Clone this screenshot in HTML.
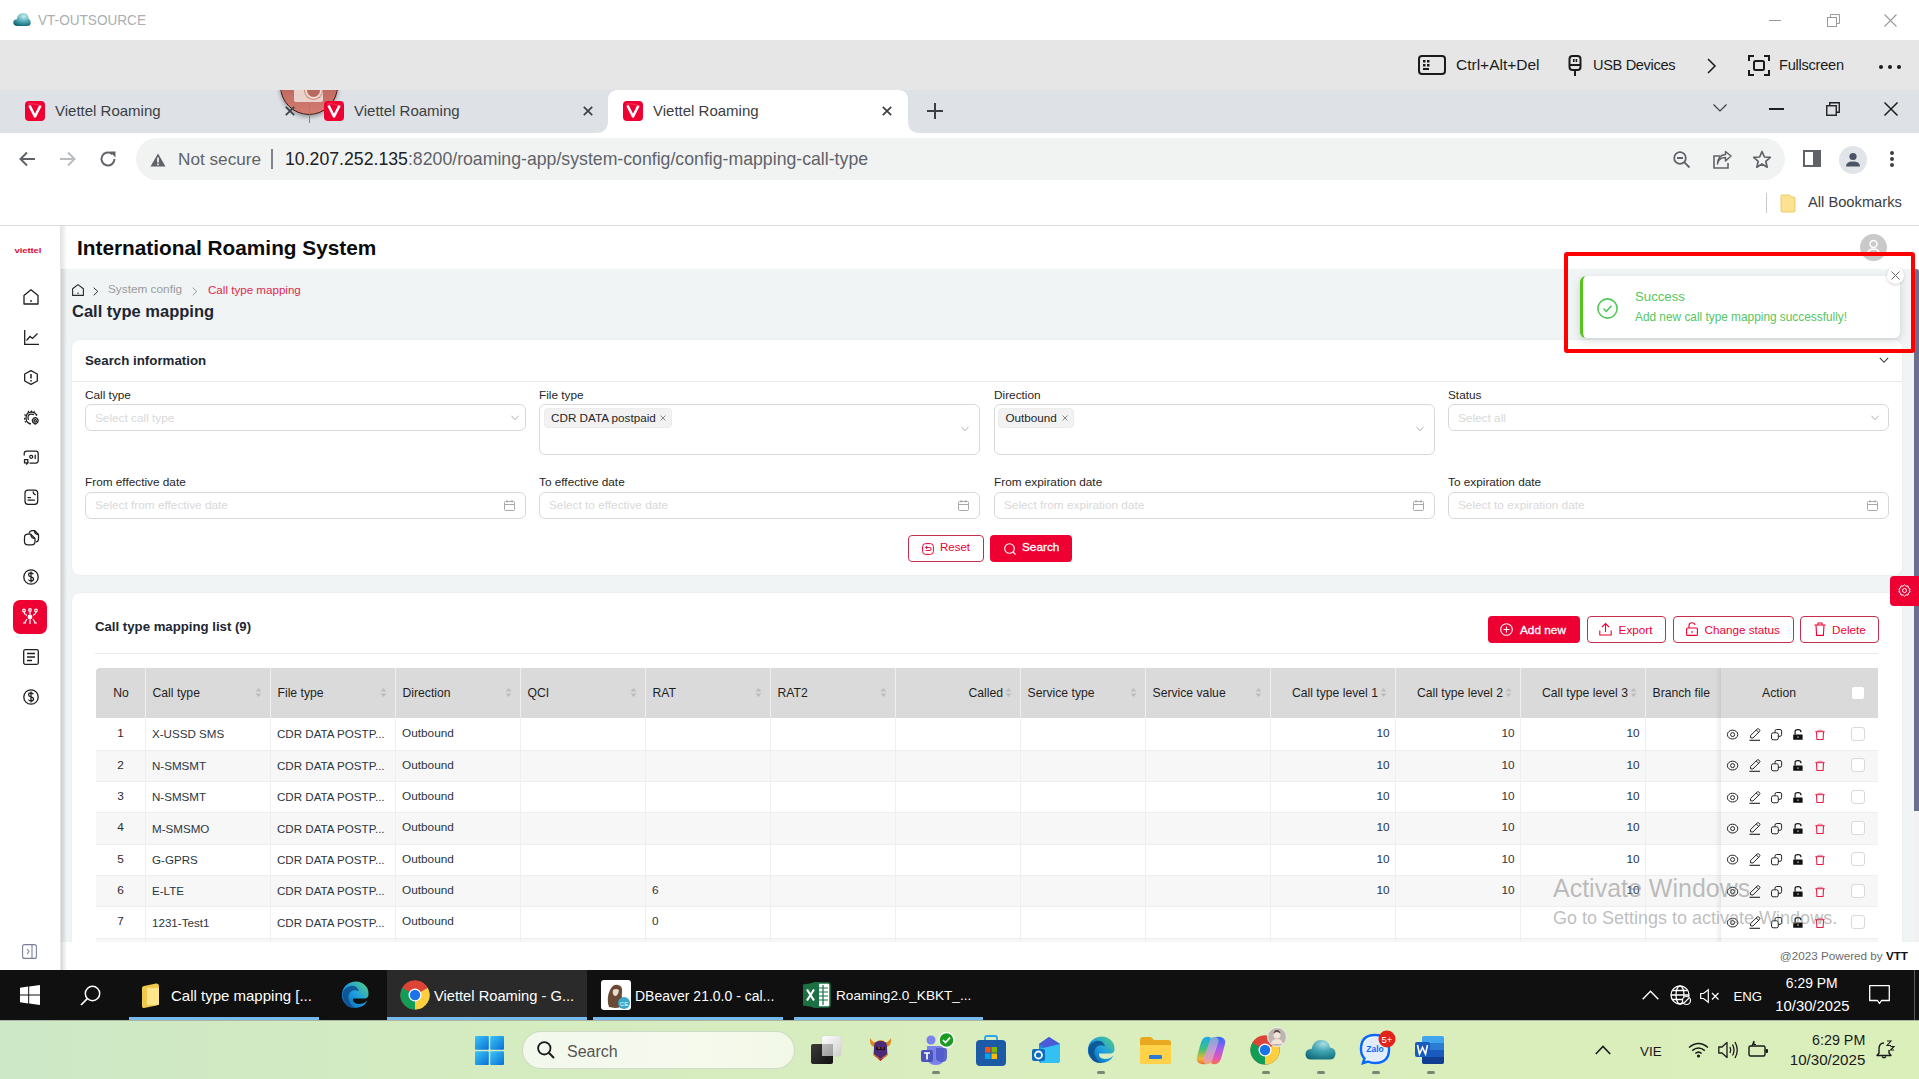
<!DOCTYPE html>
<html><head><meta charset="utf-8">
<style>
*{box-sizing:border-box;margin:0;padding:0}
html,body{width:1919px;height:1079px;overflow:hidden;background:#fff;font-family:"Liberation Sans",sans-serif;color:#222}
.a{position:absolute}
.t{position:absolute;white-space:nowrap;line-height:1}
svg{position:absolute;overflow:visible}
</style></head><body>
<!-- ===== Title bar ===== -->
<div class="a" style="left:0;top:0;width:1919px;height:40px;background:#fff"></div>
<svg style="left:13px;top:12px" width="18" height="15" viewBox="0 0 18 15"><defs><radialGradient id="cl" cx="0.6" cy="0.25" r="0.8"><stop offset="0" stop-color="#c9eef2"/><stop offset="0.45" stop-color="#5fb3bf"/><stop offset="1" stop-color="#0e6673"/></radialGradient></defs><path d="M4.5 14 Q0.3 14 0.3 10.6 Q0.3 7.4 3.8 7.2 Q4.6 1.2 10 1.2 Q15.6 1.2 15.8 7 Q17.7 7.8 17.7 10.5 Q17.7 14 14 14 Z" fill="url(#cl)"/></svg>
<div class="t" style="left:38px;top:12.3px;font-size:15px;color:#a9afb4;transform:scaleX(0.906);transform-origin:0 0">VT-OUTSOURCE</div>
<!-- window controls -->
<div class="a" style="left:1769px;top:20px;width:12px;height:1px;background:#9a9a9a"></div>
<svg style="left:1827px;top:14px" width="13" height="13" viewBox="0 0 13 13"><rect x="0.5" y="3.5" width="9" height="9" fill="none" stroke="#9a9a9a"/><path d="M3.5 3.5 V0.5 H12.5 V9.5 H9.5" fill="none" stroke="#9a9a9a"/></svg>
<svg style="left:1884px;top:14px" width="13" height="13" viewBox="0 0 13 13"><path d="M0.5 0.5 L12.5 12.5 M12.5 0.5 L0.5 12.5" stroke="#9a9a9a" stroke-width="1.1"/></svg>

<!-- ===== Remote toolbar ===== -->
<div class="a" style="left:0;top:40px;width:1919px;height:50px;background:#e6e6e6"></div>
<svg style="left:1418px;top:55px" width="28" height="20" viewBox="0 0 28 20"><rect x="1" y="1" width="26" height="18" rx="3" fill="none" stroke="#1b1b1b" stroke-width="2"/><rect x="5" y="5" width="2.5" height="2.5" fill="#1b1b1b"/><rect x="9" y="5" width="2.5" height="2.5" fill="#1b1b1b"/><rect x="5" y="9" width="2.5" height="2.5" fill="#1b1b1b"/><rect x="9" y="9" width="2.5" height="2.5" fill="#1b1b1b"/><rect x="5" y="13" width="6" height="2" fill="#1b1b1b"/></svg>
<div class="t" style="left:1456px;top:57px;font-size:15.5px;color:#1b1b1b">Ctrl+Alt+Del</div>
<svg style="left:1568px;top:55px" width="14" height="21" viewBox="0 0 14 21"><rect x="1.5" y="1" width="11" height="14" rx="3" fill="none" stroke="#1b1b1b" stroke-width="2"/><rect x="5" y="4" width="1.6" height="3" fill="#1b1b1b"/><rect x="7.6" y="4" width="1.6" height="3" fill="#1b1b1b"/><rect x="6" y="15" width="2" height="6" fill="#1b1b1b"/><rect x="1.5" y="9" width="11" height="2" fill="#1b1b1b"/></svg>
<div class="t" style="left:1593px;top:57.5px;font-size:14.6px;color:#1b1b1b;letter-spacing:-0.35px">USB Devices</div>
<svg style="left:1707px;top:58px" width="10" height="16" viewBox="0 0 10 16"><path d="M1 1 L8 8 L1 15" fill="none" stroke="#1b1b1b" stroke-width="1.5"/></svg>
<svg style="left:1748px;top:55px" width="22" height="21" viewBox="0 0 22 21"><path d="M1 6 V1 H6 M16 1 H21 V6 M21 15 V20 H16 M6 20 H1 V15" fill="none" stroke="#1b1b1b" stroke-width="2"/><rect x="6" y="6" width="10" height="9" rx="1.5" fill="none" stroke="#1b1b1b" stroke-width="2"/></svg>
<div class="t" style="left:1779px;top:57.5px;font-size:14.6px;color:#1b1b1b;letter-spacing:-0.25px">Fullscreen</div>
<div class="a" style="left:1879px;top:65px;width:4px;height:4px;border-radius:2px;background:#1b1b1b"></div>
<div class="a" style="left:1888px;top:65px;width:4px;height:4px;border-radius:2px;background:#1b1b1b"></div>
<div class="a" style="left:1897px;top:65px;width:4px;height:4px;border-radius:2px;background:#1b1b1b"></div>

<!-- ===== Tab strip ===== -->
<div class="a" style="left:0;top:90px;width:1919px;height:43px;background:#dee1e6"></div>

<!-- tab1 -->
<svg style="left:25px;top:101px" width="20" height="20" viewBox="0 0 20 20"><rect x="0" y="0" width="20" height="20" rx="4" fill="#ee0033"/><path d="M4.5 4.5 L10 15.5 L15.5 4.5" fill="none" stroke="#fff" stroke-width="2.6" stroke-linejoin="round"/><path d="M3 3 Q12 2 17 6" fill="none" stroke="#ff6f8a" stroke-width="0.5"/></svg>
<div class="t" style="left:55px;top:103px;font-size:15px;color:#3c4043">Viettel Roaming</div>

<div class="a" style="left:309px;top:100px;width:1px;height:23px;background:#80868b"></div>
<!-- camera circle -->
<div class="a" style="left:0;top:90px;width:400px;height:43px;overflow:hidden">
 <div class="a" style="left:280px;top:-33px;width:58px;height:58px;border-radius:50%;background:linear-gradient(180deg,#ad5e55 0%,#bf6a60 55%,#d47c72 100%);border:1.2px solid #3a1512;box-shadow:0 2px 4px rgba(0,0,0,.35)"></div>
 <div class="a" style="left:294px;top:-4px;width:29px;height:16px;background:#ebd3cd;border-radius:0 0 2px 2px"></div>
 <div class="a" style="left:305px;top:-8px;width:17px;height:17px;border-radius:50%;border:2px solid #f5d6d0;background:#b86a60;box-shadow:0 0 0 1px #c9857c"></div>
</div>
<div class="a" style="left:309px;top:105px;width:1px;height:18px;background:#80868b;opacity:.8"></div>
<svg style="left:285px;top:106px" width="10" height="10" viewBox="0 0 10 10"><path d="M0.8 0.8 L9.2 9.2 M9.2 0.8 L0.8 9.2" stroke="#3c4043" stroke-width="1.7"/></svg>
<!-- tab2 -->
<svg style="left:324px;top:101px" width="20" height="20" viewBox="0 0 20 20"><rect x="0" y="0" width="20" height="20" rx="4" fill="#ee0033"/><path d="M4.5 4.5 L10 15.5 L15.5 4.5" fill="none" stroke="#fff" stroke-width="2.6" stroke-linejoin="round"/><path d="M3 3 Q12 2 17 6" fill="none" stroke="#ff6f8a" stroke-width="0.5"/></svg>
<div class="t" style="left:354px;top:103px;font-size:15px;color:#3c4043">Viettel Roaming</div>
<svg style="left:583px;top:106px" width="10" height="10" viewBox="0 0 10 10"><path d="M0.8 0.8 L9.2 9.2 M9.2 0.8 L0.8 9.2" stroke="#3c4043" stroke-width="1.7"/></svg>
<!-- active tab -->
<svg style="left:596px;top:90px" width="324" height="43" viewBox="0 0 324 43"><path d="M0 43 Q12 43 12 31 V10 Q12 0 22 0 H302 Q312 0 312 10 V31 Q312 43 324 43 Z" fill="#fff"/></svg>
<svg style="left:623px;top:101px" width="20" height="20" viewBox="0 0 20 20"><rect x="0" y="0" width="20" height="20" rx="4" fill="#ee0033"/><path d="M4.5 4.5 L10 15.5 L15.5 4.5" fill="none" stroke="#fff" stroke-width="2.6" stroke-linejoin="round"/><path d="M3 3 Q12 2 17 6" fill="none" stroke="#ff6f8a" stroke-width="0.5"/></svg>
<div class="t" style="left:653px;top:103px;font-size:15px;color:#3c4043">Viettel Roaming</div>
<svg style="left:882px;top:106px" width="10" height="10" viewBox="0 0 10 10"><path d="M0.8 0.8 L9.2 9.2 M9.2 0.8 L0.8 9.2" stroke="#3c4043" stroke-width="1.7"/></svg>
<svg style="left:927px;top:103px" width="16" height="16" viewBox="0 0 16 16"><path d="M8 0 V16 M0 8 H16" stroke="#3c4043" stroke-width="2"/></svg>
<!-- right controls -->
<svg style="left:1713px;top:104px" width="14" height="8" viewBox="0 0 14 8"><path d="M0.5 0.5 L7 7 L13.5 0.5" fill="none" stroke="#3c4043" stroke-width="1.2"/></svg>
<div class="a" style="left:1769px;top:108px;width:15px;height:1.5px;background:#1f1f1f"></div>
<svg style="left:1826px;top:102px" width="14" height="14" viewBox="0 0 14 14"><rect x="0.75" y="3.75" width="9.5" height="9.5" fill="none" stroke="#1f1f1f" stroke-width="1.4"/><path d="M3.75 3.5 V0.75 H13.25 V10.25 H10.5" fill="none" stroke="#1f1f1f" stroke-width="1.4"/></svg>
<svg style="left:1884px;top:102px" width="14" height="14" viewBox="0 0 14 14"><path d="M0.5 0.5 L13.5 13.5 M13.5 0.5 L0.5 13.5" stroke="#1f1f1f" stroke-width="1.5"/></svg>


<!-- ===== Address bar ===== -->
<div class="a" style="left:0;top:133px;width:1919px;height:52px;background:#fff"></div>

<svg style="left:19px;top:151px" width="17" height="16" viewBox="0 0 17 16"><path d="M16 8 H2 M8 1.5 L1.5 8 L8 14.5" fill="none" stroke="#5f6368" stroke-width="2"/></svg>
<svg style="left:59px;top:151px" width="17" height="16" viewBox="0 0 17 16"><path d="M1 8 H15 M9 1.5 L15.5 8 L9 14.5" fill="none" stroke="#b9bcbf" stroke-width="2"/></svg>
<svg style="left:99px;top:150px" width="18" height="18" viewBox="0 0 18 18"><path d="M15.5 9 A6.5 6.5 0 1 1 13.4 4.2" fill="none" stroke="#5f6368" stroke-width="2"/><path d="M10.5 1.5 H16.5 V7.5 Z" fill="#5f6368"/></svg>
<div class="a" style="left:136px;top:138px;width:1649px;height:42px;border-radius:21px;background:#f1f3f3"></div>
<svg style="left:150px;top:153px" width="16" height="14" viewBox="0 0 16 14"><path d="M8 0.5 L15.5 13.5 H0.5 Z" fill="#5f6368"/><rect x="7.2" y="4.5" width="1.6" height="5" fill="#fff"/><rect x="7.2" y="10.6" width="1.6" height="1.6" fill="#fff"/></svg>
<div class="t" style="left:178px;top:151px;font-size:17.2px;color:#5f6368">Not secure</div>
<div class="a" style="left:271px;top:149px;width:2px;height:20px;background:#80868b"></div>
<div class="t" style="left:285px;top:151px;font-size:17.7px;color:#202124">10.207.252.135<span style="color:#5f6368">:8200/roaming-app/system-config/config-mapping-call-type</span></div>
<!-- zoom -->
<svg style="left:1673px;top:151px" width="18" height="18" viewBox="0 0 18 18"><circle cx="7" cy="7" r="5.8" fill="none" stroke="#5f6368" stroke-width="1.8"/><path d="M4 7 H10 M11.2 11.2 L16.5 16.5" stroke="#5f6368" stroke-width="1.8"/></svg>
<!-- share -->
<svg style="left:1713px;top:151px" width="19" height="18" viewBox="0 0 19 18"><path d="M7 5 H1 V17 H15 V12" fill="none" stroke="#5f6368" stroke-width="1.6"/><path d="M4.5 13 Q5.5 6.5 12.5 6.5 V10 L18 5 L12.5 0.5 V3.5 Q5 4 4.5 13 Z" fill="none" stroke="#5f6368" stroke-width="1.5" stroke-linejoin="round"/></svg>
<!-- star -->
<svg style="left:1752px;top:150px" width="20" height="19" viewBox="0 0 20 19"><path d="M10 1.5 L12.4 7 L18.3 7.4 L13.8 11.3 L15.2 17.2 L10 14 L4.8 17.2 L6.2 11.3 L1.7 7.4 L7.6 7 Z" fill="none" stroke="#5f6368" stroke-width="1.7" stroke-linejoin="round"/></svg>
<!-- side panel -->
<svg style="left:1803px;top:150px" width="18" height="17" viewBox="0 0 18 17"><rect x="1" y="1" width="16" height="15" fill="none" stroke="#5f6368" stroke-width="2"/><rect x="10" y="1" width="7" height="15" fill="#5f6368"/></svg>
<!-- profile -->
<div class="a" style="left:1839px;top:146px;width:28px;height:28px;border-radius:50%;background:#e1e4e8"></div>
<svg style="left:1843px;top:150px" width="20" height="20" viewBox="0 0 20 20"><circle cx="10" cy="6.5" r="3.6" fill="#4b5466"/><path d="M3 16.5 Q3 11.5 10 11.5 Q17 11.5 17 16.5 Z" fill="#4b5466"/></svg>
<div class="a" style="left:1890px;top:151px;width:4px;height:4px;border-radius:2px;background:#3c4043"></div>
<div class="a" style="left:1890px;top:157px;width:4px;height:4px;border-radius:2px;background:#3c4043"></div>
<div class="a" style="left:1890px;top:163px;width:4px;height:4px;border-radius:2px;background:#3c4043"></div>


<!-- ===== Bookmarks bar ===== -->
<div class="a" style="left:0;top:185px;width:1919px;height:40px;background:#fff"></div>
<div class="a" style="left:0;top:225px;width:1919px;height:1px;background:#d9dcdf"></div>

<div class="a" style="left:1766px;top:193px;width:1px;height:20px;background:#c7c9cc"></div>
<svg style="left:1780px;top:194px" width="16" height="19" viewBox="0 0 16 19"><path d="M1 2 Q1 1 2 1 H9 Q10 1 10.5 2 L11 3 H14 Q15 3 15 4 V17 Q15 18 14 18 H2 Q1 18 1 17 Z" fill="#fde293" stroke="#e8c34a" stroke-width="0.8"/></svg>
<div class="t" style="left:1808px;top:195px;font-size:14.7px;color:#3c4043">All Bookmarks</div>


<!-- ===== App ===== -->
<div class="a" style="left:0px;top:226px;width:60px;height:744px;background:#fff;"></div>
<div class="a" style="left:60px;top:226px;width:1px;height:744px;background:#e4e6e8;"></div>
<div class="a" style="left:61px;top:269px;width:5px;height:673px;background:linear-gradient(90deg,#d9dcdf,rgba(240,244,244,0));"></div>
<div class="t" style="left:14.5px;top:244.5px;font-size:9.6px;color:#d8103c;font-weight:700;letter-spacing:-0.15px;transform:scaleY(0.82);transform-origin:0 100%">viettel</div>
<svg style="left:23px;top:289px" width="16" height="16" viewBox="0 0 16 16"><path d="M1 6.5 L8 0.8 L15 6.5 V15 H1 Z" fill="none" stroke="#1f1f1f" stroke-width="1.3" stroke-linejoin="round"/><path d="M8 11 V13" stroke="#1f1f1f" stroke-width="1.3"/></svg>
<svg style="left:24px;top:330px" width="15" height="15" viewBox="0 0 15 15"><path d="M0.7 0 V14.3 H15" fill="none" stroke="#1f1f1f" stroke-width="1.3"/><path d="M2.5 10.5 L6 6.5 L8.5 8.5 L13.5 3.5" fill="none" stroke="#1f1f1f" stroke-width="1.3"/></svg>
<svg style="left:24px;top:370px" width="14" height="15" viewBox="0 0 14 15"><path d="M7 0.7 L13.3 4 V11 L7 14.3 L0.7 11 V4 Z" fill="none" stroke="#1f1f1f" stroke-width="1.3" stroke-linejoin="round"/><path d="M7 4 V8.6" stroke="#1f1f1f" stroke-width="1.5"/><circle cx="7" cy="10.8" r="0.9" fill="#1f1f1f"/></svg>
<svg style="left:24px;top:410px" width="16" height="16" viewBox="0 0 16 16"><g fill="none" stroke="#1f1f1f" stroke-width="1.25" stroke-linejoin="round"><path d="M12.5 5.2 Q11.5 2 7.5 2 Q2 2 2 8 Q2 13 6.5 13.8"/><path d="M10 4.7 Q9 4 7.2 4 Q4 4 4 7.5 Q4 9 4.6 9.8"/><path d="M9.6 8.3 L11.3 7.6 L13 8.3 L14.2 10.2 L13.5 12.6 L11.3 14.2 L9 12.6 L8.3 10.2 Z"/><circle cx="11.2" cy="10.9" r="1.2"/></g><g fill="#1f1f1f"><path d="M4.2 0.2 L5.5 2.2 L3.3 2.7 Z M7.3 0 L8.5 2 L6.2 2 Z M10.3 0.6 L11 2.8 L9 2.4 Z M13.9 4.8 L12 6.2 L11.8 4.2 Z M0 4.2 L2.3 4.8 L1.1 6.5 Z M0 7.5 L2 8.8 L0.2 9.9 Z M0.3 11 L2.5 11.3 L1.6 12.9 Z M5.8 15 L5 12.8 L7.3 13.2 Z"/></g></svg>
<svg style="left:23px;top:450px" width="16" height="15" viewBox="0 0 16 15"><g fill="none" stroke="#1f1f1f" stroke-width="1.25" stroke-linecap="round"><path d="M1.2 5 V3.5 Q1.2 1 3.7 1 H12.8 Q15.2 1 15.2 3.5 V10.5 Q15.2 13 12.8 13 H7"/><circle cx="8.2" cy="6.8" r="1.5"/><path d="M12.2 5 V8.6"/><path d="M1.5 9.5 H4.8 V13 M1.5 9.5 V12.8 H4.8 L3.5 14.2"/></g></svg>
<svg style="left:24px;top:489px" width="15" height="16" viewBox="0 0 15 16"><g fill="none" stroke="#1f1f1f" stroke-width="1.25" stroke-linecap="round"><rect x="1" y="1" width="12.7" height="14.3" rx="3"/><path d="M4 8.5 H6.5 M4 11 H10.5"/><path d="M9.2 2.8 Q9.2 5.2 11.3 5.6"/></g></svg>
<svg style="left:23px;top:529px" width="17" height="17" viewBox="0 0 17 17"><g fill="none" stroke="#1f1f1f" stroke-width="1.25" stroke-linejoin="round"><path d="M6 4.5 Q6.5 1.5 9.5 1.5 H11.5 L15.5 5.5 V10 Q15.5 12.5 13 13"/><path d="M1.5 8.5 Q1.5 5.2 4.8 5.2 H7.8 L12 9.4 V12.5 Q12 15.8 8.7 15.8 H4.8 Q1.5 15.8 1.5 12.5 Z"/><path d="M7.8 5.2 Q7.8 9.4 12 9.4"/><path d="M11.5 1.5 Q11.5 5.5 15.5 5.5"/></g></svg>
<svg style="left:23px;top:569px" width="16" height="16" viewBox="0 0 16 16"><circle cx="8" cy="8" r="7.2" fill="none" stroke="#1f1f1f" stroke-width="1.3"/><path d="M10.3 5.3 Q9.8 4 8 4 Q5.6 4 5.6 5.8 Q5.6 7.4 8 7.9 Q10.5 8.4 10.5 10.2 Q10.5 12 8 12 Q6 12 5.5 10.6 M8 2.6 V13.4" fill="none" stroke="#1f1f1f" stroke-width="1.3"/></svg>
<div class="a" style="left:13px;top:600px;width:34px;height:34px;background:#ee0033;border-radius:7px"></div>
<svg style="left:21px;top:608px" width="18" height="18" viewBox="0 0 18 18"><g fill="none" stroke="#fff" stroke-width="1.2"><circle cx="3" cy="2.5" r="1.3"/><circle cx="9" cy="2" r="1.3"/><circle cx="15" cy="2.5" r="1.3"/><path d="M3 4 Q3 6 6 7.5 M9 3.5 V6.5 M15 4 Q15 6 12 7.5"/><circle cx="9" cy="9" r="1.8" fill="#fff"/><path d="M6 11 L3.5 15 M12 11 L14.5 15 M9 11.5 V16 M2 15 H5 M13 15 H16"/></g></svg>
<svg style="left:23px;top:649px" width="16" height="16" viewBox="0 0 16 16"><rect x="0.7" y="0.7" width="14.6" height="14.6" rx="1.5" fill="none" stroke="#1f1f1f" stroke-width="1.3"/><path d="M4 4.5 H12 M4 8 H12 M4 11.5 H9" stroke="#1f1f1f" stroke-width="1.3"/></svg>
<svg style="left:23px;top:689px" width="16" height="16" viewBox="0 0 16 16"><circle cx="8" cy="8" r="7.2" fill="none" stroke="#1f1f1f" stroke-width="1.3"/><path d="M10.3 5.3 Q9.8 4 8 4 Q5.6 4 5.6 5.8 Q5.6 7.4 8 7.9 Q10.5 8.4 10.5 10.2 Q10.5 12 8 12 Q6 12 5.5 10.6 M8 2.6 V13.4" fill="none" stroke="#1f1f1f" stroke-width="1.3"/></svg>
<svg style="left:22px;top:944px" width="15" height="15" viewBox="0 0 15 15"><rect x="0.6" y="0.6" width="13.8" height="13.8" rx="2" fill="none" stroke="#7a7f9a" stroke-width="1.1"/><path d="M10 1 V14" stroke="#7a7f9a" stroke-width="1.1"/><path d="M5 5 L7 7.5 L5 10" fill="none" stroke="#7a7f9a" stroke-width="1.1"/></svg>
<div class="a" style="left:61px;top:226px;width:1858px;height:43px;background:#fff;"></div>
<div class="t" style="left:77px;top:237.59px;font-size:20.8px;color:#0b0b0b;font-weight:700;">International Roaming System</div>
<div class="a" style="left:1860px;top:234px;width:27px;height:27px;background:#c9c9c9;border-radius:50%"></div>
<svg style="left:1866px;top:239px" width="15" height="17" viewBox="0 0 15 17"><circle cx="7.5" cy="5" r="3.5" fill="none" stroke="#fff" stroke-width="1.5"/><path d="M1.5 16 Q1.5 10 7.5 10 Q13.5 10 13.5 16" fill="none" stroke="#fff" stroke-width="1.5"/></svg>
<div class="a" style="left:61px;top:269px;width:1853px;height:673px;background:#f0f4f4;"></div>
<div class="a" style="left:61px;top:269px;width:6px;height:673px;background:linear-gradient(90deg,#c9cdd1,rgba(240,244,244,0));"></div>
<div class="a" style="left:1914px;top:269px;width:5px;height:542px;background:#6b6f8e;border-radius:3px 3px 0 0"></div>
<div class="a" style="left:1914px;top:811px;width:5px;height:131px;background:#f1f1f1;"></div>
<svg style="left:72px;top:284px" width="12" height="12" viewBox="0 0 12 12"><path d="M0.6 4.8 L6 0.6 L11.4 4.8 V11.4 H0.6 Z" fill="none" stroke="#2a2a2a" stroke-width="1.1" stroke-linejoin="round"/><path d="M6 8.5 V10" stroke="#2a2a2a" stroke-width="1.1"/></svg>
<svg style="left:93px;top:287px" width="6" height="9" viewBox="0 0 6 9"><path d="M0.7 0.7 L4.8 4.5 L0.7 8.3" fill="none" stroke="#333" stroke-width="1"/></svg>
<div class="t" style="left:108px;top:284.41px;font-size:11.8px;color:#9b9b9b;font-weight:400;">System config</div>
<svg style="left:192px;top:287px" width="6" height="9" viewBox="0 0 6 9"><path d="M0.7 0.7 L4.8 4.5 L0.7 8.3" fill="none" stroke="#9b9b9b" stroke-width="1"/></svg>
<div class="t" style="left:208px;top:284.38px;font-size:11.6px;color:#e0284f;font-weight:400;">Call type mapping</div>
<div class="t" style="left:72px;top:303.03px;font-size:16.5px;color:#1c2733;font-weight:700;">Call type mapping</div>
<div class="a" style="left:72px;top:340px;width:1830px;height:235px;background:#fff;border-radius:8px;box-shadow:0 0 2px rgba(120,140,150,0.12)"></div>
<div class="t" style="left:85px;top:354.24px;font-size:13.3px;color:#1c2733;font-weight:700;">Search information</div>
<div class="a" style="left:72px;top:381px;width:1830px;height:1px;background:#e9e9e9;"></div>
<svg style="left:1879px;top:357px" width="10" height="7" viewBox="0 0 10 7"><path d="M0.8 0.8 L5 5.3 L9.2 0.8" fill="none" stroke="#333" stroke-width="1.05"/></svg>
<div class="t" style="left:85px;top:389.61px;font-size:11.8px;color:#262626;font-weight:400;">Call type</div>
<div class="t" style="left:85px;top:476.61px;font-size:11.8px;color:#262626;font-weight:400;">From effective date</div>
<div class="a" style="left:85px;top:492px;width:441px;height:27px;background:#fff;border:1px solid #d9d9d9;border-radius:6px"></div>
<div class="t" style="left:95px;top:499.61px;font-size:11.8px;color:#d9d9d9;font-weight:400;">Select from effective date</div>
<svg style="left:504px;top:500px" width="11" height="11" viewBox="0 0 11 11"><rect x="0.5" y="1.5" width="10" height="9" rx="1" fill="none" stroke="#a8a8a8" stroke-width="1"/><path d="M0.5 4.5 H10.5 M3 0 V2.5 M8 0 V2.5" stroke="#a8a8a8" stroke-width="1"/></svg>
<div class="t" style="left:539px;top:389.61px;font-size:11.8px;color:#262626;font-weight:400;">File type</div>
<div class="t" style="left:539px;top:476.61px;font-size:11.8px;color:#262626;font-weight:400;">To effective date</div>
<div class="a" style="left:539px;top:492px;width:441px;height:27px;background:#fff;border:1px solid #d9d9d9;border-radius:6px"></div>
<div class="t" style="left:549px;top:499.61px;font-size:11.8px;color:#d9d9d9;font-weight:400;">Select to effective date</div>
<svg style="left:958px;top:500px" width="11" height="11" viewBox="0 0 11 11"><rect x="0.5" y="1.5" width="10" height="9" rx="1" fill="none" stroke="#a8a8a8" stroke-width="1"/><path d="M0.5 4.5 H10.5 M3 0 V2.5 M8 0 V2.5" stroke="#a8a8a8" stroke-width="1"/></svg>
<div class="t" style="left:994px;top:389.61px;font-size:11.8px;color:#262626;font-weight:400;">Direction</div>
<div class="t" style="left:994px;top:476.61px;font-size:11.8px;color:#262626;font-weight:400;">From expiration date</div>
<div class="a" style="left:994px;top:492px;width:441px;height:27px;background:#fff;border:1px solid #d9d9d9;border-radius:6px"></div>
<div class="t" style="left:1004px;top:499.61px;font-size:11.8px;color:#d9d9d9;font-weight:400;">Select from expiration date</div>
<svg style="left:1413px;top:500px" width="11" height="11" viewBox="0 0 11 11"><rect x="0.5" y="1.5" width="10" height="9" rx="1" fill="none" stroke="#a8a8a8" stroke-width="1"/><path d="M0.5 4.5 H10.5 M3 0 V2.5 M8 0 V2.5" stroke="#a8a8a8" stroke-width="1"/></svg>
<div class="t" style="left:1448px;top:389.61px;font-size:11.8px;color:#262626;font-weight:400;">Status</div>
<div class="t" style="left:1448px;top:476.61px;font-size:11.8px;color:#262626;font-weight:400;">To expiration date</div>
<div class="a" style="left:1448px;top:492px;width:441px;height:27px;background:#fff;border:1px solid #d9d9d9;border-radius:6px"></div>
<div class="t" style="left:1458px;top:499.61px;font-size:11.8px;color:#d9d9d9;font-weight:400;">Select to expiration date</div>
<svg style="left:1867px;top:500px" width="11" height="11" viewBox="0 0 11 11"><rect x="0.5" y="1.5" width="10" height="9" rx="1" fill="none" stroke="#a8a8a8" stroke-width="1"/><path d="M0.5 4.5 H10.5 M3 0 V2.5 M8 0 V2.5" stroke="#a8a8a8" stroke-width="1"/></svg>
<div class="a" style="left:85px;top:404px;width:441px;height:27px;background:#fff;border:1px solid #d9d9d9;border-radius:6px"></div>
<div class="t" style="left:95px;top:412.51px;font-size:11.8px;color:#d9d9d9;font-weight:400;">Select call type</div>
<svg style="left:511px;top:415px" width="8" height="6" viewBox="0 0 8 6"><path d="M0.5 0.8 L4 4.8 L7.5 0.8" fill="none" stroke="#b0b0b0" stroke-width="1"/></svg>
<div class="a" style="left:539px;top:404px;width:441px;height:51px;background:#fff;border:1px solid #d9d9d9;border-radius:6px"></div>
<div class="a" style="left:544px;top:408px;width:128px;height:20px;background:#f2f2f2;border-radius:4px;border:1px solid #ececec"></div>
<div class="t" style="left:551px;top:412.40px;font-size:11.7px;color:#262626;font-weight:400;">CDR DATA postpaid</div>
<svg style="left:660px;top:415px" width="6" height="6" viewBox="0 0 6 6"><path d="M0.5 0.5 L5.5 5.5 M5.5 0.5 L0.5 5.5" stroke="#888" stroke-width="1"/></svg>
<svg style="left:961px;top:426px" width="8" height="6" viewBox="0 0 8 6"><path d="M0.5 0.8 L4 4.8 L7.5 0.8" fill="none" stroke="#b0b0b0" stroke-width="1"/></svg>
<div class="a" style="left:994px;top:404px;width:441px;height:51px;background:#fff;border:1px solid #d9d9d9;border-radius:6px"></div>
<div class="a" style="left:998px;top:408px;width:76px;height:20px;background:#f2f2f2;border-radius:4px;border:1px solid #ececec"></div>
<div class="t" style="left:1005.5px;top:412.40px;font-size:11.7px;color:#262626;font-weight:400;">Outbound</div>
<svg style="left:1062px;top:415px" width="6" height="6" viewBox="0 0 6 6"><path d="M0.5 0.5 L5.5 5.5 M5.5 0.5 L0.5 5.5" stroke="#888" stroke-width="1"/></svg>
<svg style="left:1416px;top:426px" width="8" height="6" viewBox="0 0 8 6"><path d="M0.5 0.8 L4 4.8 L7.5 0.8" fill="none" stroke="#b0b0b0" stroke-width="1"/></svg>
<div class="a" style="left:1448px;top:404px;width:441px;height:27px;background:#fff;border:1px solid #d9d9d9;border-radius:6px"></div>
<div class="t" style="left:1458px;top:412.51px;font-size:11.8px;color:#d9d9d9;font-weight:400;">Select all</div>
<svg style="left:1871px;top:415px" width="8" height="6" viewBox="0 0 8 6"><path d="M0.5 0.8 L4 4.8 L7.5 0.8" fill="none" stroke="#b0b0b0" stroke-width="1"/></svg>
<div class="a" style="left:908px;top:535px;width:76px;height:27px;background:#fff;border:1px solid #c4304c;border-radius:4px"></div>
<svg style="left:922px;top:543px" width="12" height="12" viewBox="0 0 12 12"><rect x="0.6" y="0.6" width="10.8" height="10.8" rx="3" fill="none" stroke="#ee0033" stroke-width="1"/><path d="M3.5 4.5 H8 Q9 4.5 9 6 Q9 7.5 8 7.5 H3.5 M5 3 L3.5 4.5 L5 6" fill="none" stroke="#ee0033" stroke-width="0.9"/></svg>
<div class="t" style="left:940px;top:542.17px;font-size:11.5px;color:#ee0033;font-weight:400;">Reset</div>
<div class="a" style="left:990px;top:535px;width:82px;height:27px;background:#ee0033;border-radius:4px"></div>
<svg style="left:1004px;top:543px" width="12" height="12" viewBox="0 0 12 12"><circle cx="5.5" cy="5.5" r="4.8" fill="none" stroke="#fff" stroke-width="1.1"/><path d="M9 9 L11.5 11.5" stroke="#fff" stroke-width="1.1"/></svg>
<div class="t" style="left:1022px;top:542.21px;font-size:11.8px;color:#fff;font-weight:400;-webkit-text-stroke:0.3px #fff">Search</div>
<div class="a" style="left:72px;top:593px;width:1830px;height:400px;background:#fff;border-radius:8px;box-shadow:0 0 2px rgba(120,140,150,0.12)"></div>
<div class="t" style="left:95px;top:619.83px;font-size:13.2px;color:#1c2733;font-weight:700;">Call type mapping list (9)</div>
<div class="a" style="left:95px;top:653px;width:1783px;height:1px;background:#e9e9e9;"></div>
<div class="a" style="left:1488px;top:616px;width:92px;height:27px;background:#ee0033;border-radius:4px"></div>
<svg style="left:1500px;top:623px" width="13" height="13" viewBox="0 0 13 13"><circle cx="6.5" cy="6.5" r="5.8" fill="none" stroke="#fff" stroke-width="1.1"/><path d="M6.5 3.5 V9.5 M3.5 6.5 H9.5" stroke="#fff" stroke-width="1.1"/></svg>
<div class="t" style="left:1520px;top:624.61px;font-size:11.8px;color:#fff;font-weight:400;-webkit-text-stroke:0.3px #fff">Add new</div>
<div class="a" style="left:1587px;top:616px;width:79px;height:27px;background:#fff;border:1px solid #c4304c;border-radius:4px"></div>
<div class="t" style="left:1618.6px;top:624.10px;font-size:11.7px;color:#ee0033;font-weight:400;">Export</div>
<div class="a" style="left:1673px;top:616px;width:121px;height:27px;background:#fff;border:1px solid #c4304c;border-radius:4px"></div>
<div class="t" style="left:1704.5px;top:624.10px;font-size:11.7px;color:#ee0033;font-weight:400;">Change status</div>
<div class="a" style="left:1800px;top:616px;width:79px;height:27px;background:#fff;border:1px solid #c4304c;border-radius:4px"></div>
<div class="t" style="left:1832px;top:624.10px;font-size:11.7px;color:#ee0033;font-weight:400;">Delete</div>
<svg style="left:1599px;top:622px" width="13" height="14" viewBox="0 0 13 14"><path d="M6.5 10 V1.5 M3 5 L6.5 1.5 L10 5 M0.8 8.5 V13 H12.2 V8.5" fill="none" stroke="#ee0033" stroke-width="1.1"/></svg>
<svg style="left:1686px;top:622px" width="12" height="14" viewBox="0 0 12 14"><rect x="0.6" y="6" width="10.8" height="7.4" rx="1" fill="none" stroke="#ee0033" stroke-width="1.1"/><path d="M3 6 V3.5 Q3 0.7 6 0.7 Q8.6 0.7 9 3" fill="none" stroke="#ee0033" stroke-width="1.1"/><path d="M6 9 V11" stroke="#ee0033" stroke-width="1.1"/></svg>
<svg style="left:1814px;top:622px" width="12" height="14" viewBox="0 0 12 14"><path d="M0.5 3 H11.5 M4 3 V1 H8 V3 M2 3 L2.6 13.4 H9.4 L10 3" fill="none" stroke="#ee0033" stroke-width="1.1"/></svg>
<div class="a" style="left:96px;top:668px;width:1782px;height:274px;overflow:hidden">
<div class="a" style="left:0px;top:0px;width:1783px;height:50px;background:#dadada;border-radius:4px 0 0 0"></div>
<div class="t" style="left:-175.0px;width:400px;text-align:center;top:19.17px;font-size:12.2px;color:#1f1f1f;font-weight:400;">No</div>
<div class="a" style="left:49px;top:0px;width:1px;height:50px;background:#eeeeee;"></div>
<div class="t" style="left:56.5px;top:19.17px;font-size:12.2px;color:#1f1f1f;font-weight:400;">Call type</div>
<svg style="left:159px;top:19px" width="7" height="11" viewBox="0 0 7 11"><path d="M0.5 4.5 L3.5 1 L6.5 4.5 Z M0.5 6.5 L3.5 10 L6.5 6.5 Z" fill="#bdbdbd"/></svg>
<div class="a" style="left:174px;top:0px;width:1px;height:50px;background:#eeeeee;"></div>
<div class="t" style="left:181.5px;top:19.17px;font-size:12.2px;color:#1f1f1f;font-weight:400;">File type</div>
<svg style="left:284px;top:19px" width="7" height="11" viewBox="0 0 7 11"><path d="M0.5 4.5 L3.5 1 L6.5 4.5 Z M0.5 6.5 L3.5 10 L6.5 6.5 Z" fill="#bdbdbd"/></svg>
<div class="a" style="left:299px;top:0px;width:1px;height:50px;background:#eeeeee;"></div>
<div class="t" style="left:306.5px;top:19.17px;font-size:12.2px;color:#1f1f1f;font-weight:400;">Direction</div>
<svg style="left:409px;top:19px" width="7" height="11" viewBox="0 0 7 11"><path d="M0.5 4.5 L3.5 1 L6.5 4.5 Z M0.5 6.5 L3.5 10 L6.5 6.5 Z" fill="#bdbdbd"/></svg>
<div class="a" style="left:424px;top:0px;width:1px;height:50px;background:#eeeeee;"></div>
<div class="t" style="left:431.5px;top:19.17px;font-size:12.2px;color:#1f1f1f;font-weight:400;">QCI</div>
<svg style="left:534px;top:19px" width="7" height="11" viewBox="0 0 7 11"><path d="M0.5 4.5 L3.5 1 L6.5 4.5 Z M0.5 6.5 L3.5 10 L6.5 6.5 Z" fill="#bdbdbd"/></svg>
<div class="a" style="left:549px;top:0px;width:1px;height:50px;background:#eeeeee;"></div>
<div class="t" style="left:556.5px;top:19.17px;font-size:12.2px;color:#1f1f1f;font-weight:400;">RAT</div>
<svg style="left:659px;top:19px" width="7" height="11" viewBox="0 0 7 11"><path d="M0.5 4.5 L3.5 1 L6.5 4.5 Z M0.5 6.5 L3.5 10 L6.5 6.5 Z" fill="#bdbdbd"/></svg>
<div class="a" style="left:674px;top:0px;width:1px;height:50px;background:#eeeeee;"></div>
<div class="t" style="left:681.5px;top:19.17px;font-size:12.2px;color:#1f1f1f;font-weight:400;">RAT2</div>
<svg style="left:784px;top:19px" width="7" height="11" viewBox="0 0 7 11"><path d="M0.5 4.5 L3.5 1 L6.5 4.5 Z M0.5 6.5 L3.5 10 L6.5 6.5 Z" fill="#bdbdbd"/></svg>
<div class="a" style="left:799px;top:0px;width:1px;height:50px;background:#eeeeee;"></div>
<div class="t" style="left:607px;width:300px;text-align:right;top:19.17px;font-size:12.2px;color:#1f1f1f;font-weight:400;">Called</div>
<svg style="left:909px;top:19px" width="7" height="11" viewBox="0 0 7 11"><path d="M0.5 4.5 L3.5 1 L6.5 4.5 Z M0.5 6.5 L3.5 10 L6.5 6.5 Z" fill="#bdbdbd"/></svg>
<div class="a" style="left:924px;top:0px;width:1px;height:50px;background:#eeeeee;"></div>
<div class="t" style="left:931.5px;top:19.17px;font-size:12.2px;color:#1f1f1f;font-weight:400;">Service type</div>
<svg style="left:1034px;top:19px" width="7" height="11" viewBox="0 0 7 11"><path d="M0.5 4.5 L3.5 1 L6.5 4.5 Z M0.5 6.5 L3.5 10 L6.5 6.5 Z" fill="#bdbdbd"/></svg>
<div class="a" style="left:1049px;top:0px;width:1px;height:50px;background:#eeeeee;"></div>
<div class="t" style="left:1056.5px;top:19.17px;font-size:12.2px;color:#1f1f1f;font-weight:400;">Service value</div>
<svg style="left:1159px;top:19px" width="7" height="11" viewBox="0 0 7 11"><path d="M0.5 4.5 L3.5 1 L6.5 4.5 Z M0.5 6.5 L3.5 10 L6.5 6.5 Z" fill="#bdbdbd"/></svg>
<div class="a" style="left:1174px;top:0px;width:1px;height:50px;background:#eeeeee;"></div>
<div class="t" style="left:982px;width:300px;text-align:right;top:19.17px;font-size:12.2px;color:#1f1f1f;font-weight:400;">Call type level 1</div>
<svg style="left:1284px;top:19px" width="7" height="11" viewBox="0 0 7 11"><path d="M0.5 4.5 L3.5 1 L6.5 4.5 Z M0.5 6.5 L3.5 10 L6.5 6.5 Z" fill="#bdbdbd"/></svg>
<div class="a" style="left:1299px;top:0px;width:1px;height:50px;background:#eeeeee;"></div>
<div class="t" style="left:1107px;width:300px;text-align:right;top:19.17px;font-size:12.2px;color:#1f1f1f;font-weight:400;">Call type level 2</div>
<svg style="left:1409px;top:19px" width="7" height="11" viewBox="0 0 7 11"><path d="M0.5 4.5 L3.5 1 L6.5 4.5 Z M0.5 6.5 L3.5 10 L6.5 6.5 Z" fill="#bdbdbd"/></svg>
<div class="a" style="left:1424px;top:0px;width:1px;height:50px;background:#eeeeee;"></div>
<div class="t" style="left:1232px;width:300px;text-align:right;top:19.17px;font-size:12.2px;color:#1f1f1f;font-weight:400;">Call type level 3</div>
<svg style="left:1534px;top:19px" width="7" height="11" viewBox="0 0 7 11"><path d="M0.5 4.5 L3.5 1 L6.5 4.5 Z M0.5 6.5 L3.5 10 L6.5 6.5 Z" fill="#bdbdbd"/></svg>
<div class="a" style="left:1549px;top:0px;width:1px;height:50px;background:#eeeeee;"></div>
<div class="t" style="left:1556.5px;top:19.17px;font-size:12.2px;color:#1f1f1f;font-weight:400;">Branch file</div>
<div class="t" style="left:1483px;width:400px;text-align:center;top:19.17px;font-size:12.2px;color:#1f1f1f;font-weight:400;">Action</div>
<div class="a" style="left:1756px;top:19px;width:12px;height:12px;background:#fff;border-radius:2px"></div>
<div class="a" style="left:0px;top:50px;width:1783px;height:32px;background:#fff;"></div>
<div class="a" style="left:0px;top:82px;width:1783px;height:1px;background:#eeeeee;"></div>
<div class="a" style="left:49px;top:50px;width:1px;height:32px;background:#efefef;"></div>
<div class="a" style="left:174px;top:50px;width:1px;height:32px;background:#efefef;"></div>
<div class="a" style="left:299px;top:50px;width:1px;height:32px;background:#efefef;"></div>
<div class="a" style="left:424px;top:50px;width:1px;height:32px;background:#efefef;"></div>
<div class="a" style="left:549px;top:50px;width:1px;height:32px;background:#efefef;"></div>
<div class="a" style="left:674px;top:50px;width:1px;height:32px;background:#efefef;"></div>
<div class="a" style="left:799px;top:50px;width:1px;height:32px;background:#efefef;"></div>
<div class="a" style="left:924px;top:50px;width:1px;height:32px;background:#efefef;"></div>
<div class="a" style="left:1049px;top:50px;width:1px;height:32px;background:#efefef;"></div>
<div class="a" style="left:1174px;top:50px;width:1px;height:32px;background:#efefef;"></div>
<div class="a" style="left:1299px;top:50px;width:1px;height:32px;background:#efefef;"></div>
<div class="a" style="left:1424px;top:50px;width:1px;height:32px;background:#efefef;"></div>
<div class="a" style="left:1549px;top:50px;width:1px;height:32px;background:#efefef;"></div>
<div class="t" style="left:-175.5px;width:400px;text-align:center;top:60.31px;font-size:11.8px;color:#2b2b2b;font-weight:400;">1</div>
<div class="t" style="left:56px;top:60.48px;font-size:11.6px;color:#2b3640;font-weight:400;">X-USSD SMS</div>
<div class="t" style="left:181px;top:60.48px;font-size:11.6px;color:#2b3640;font-weight:400;">CDR DATA POSTP...</div>
<div class="t" style="left:306px;top:60.31px;font-size:11.8px;color:#2b3640;font-weight:400;">Outbound</div>
<div class="t" style="left:1193.5px;width:100px;text-align:right;top:60.31px;font-size:11.8px;color:#2b3640;font-weight:400;">10</div>
<div class="t" style="left:1318.5px;width:100px;text-align:right;top:60.31px;font-size:11.8px;color:#2b3640;font-weight:400;">10</div>
<div class="t" style="left:1443.5px;width:100px;text-align:right;top:60.31px;font-size:11.8px;color:#2b3640;font-weight:400;">10</div>
<div class="a" style="left:0px;top:83px;width:1783px;height:30px;background:#f7f7f7;"></div>
<div class="a" style="left:0px;top:113px;width:1783px;height:1px;background:#eeeeee;"></div>
<div class="a" style="left:49px;top:83px;width:1px;height:30px;background:#efefef;"></div>
<div class="a" style="left:174px;top:83px;width:1px;height:30px;background:#efefef;"></div>
<div class="a" style="left:299px;top:83px;width:1px;height:30px;background:#efefef;"></div>
<div class="a" style="left:424px;top:83px;width:1px;height:30px;background:#efefef;"></div>
<div class="a" style="left:549px;top:83px;width:1px;height:30px;background:#efefef;"></div>
<div class="a" style="left:674px;top:83px;width:1px;height:30px;background:#efefef;"></div>
<div class="a" style="left:799px;top:83px;width:1px;height:30px;background:#efefef;"></div>
<div class="a" style="left:924px;top:83px;width:1px;height:30px;background:#efefef;"></div>
<div class="a" style="left:1049px;top:83px;width:1px;height:30px;background:#efefef;"></div>
<div class="a" style="left:1174px;top:83px;width:1px;height:30px;background:#efefef;"></div>
<div class="a" style="left:1299px;top:83px;width:1px;height:30px;background:#efefef;"></div>
<div class="a" style="left:1424px;top:83px;width:1px;height:30px;background:#efefef;"></div>
<div class="a" style="left:1549px;top:83px;width:1px;height:30px;background:#efefef;"></div>
<div class="t" style="left:-175.5px;width:400px;text-align:center;top:91.66px;font-size:11.8px;color:#2b2b2b;font-weight:400;">2</div>
<div class="t" style="left:56px;top:91.83px;font-size:11.6px;color:#2b3640;font-weight:400;">N-SMSMT</div>
<div class="t" style="left:181px;top:91.83px;font-size:11.6px;color:#2b3640;font-weight:400;">CDR DATA POSTP...</div>
<div class="t" style="left:306px;top:91.66px;font-size:11.8px;color:#2b3640;font-weight:400;">Outbound</div>
<div class="t" style="left:1193.5px;width:100px;text-align:right;top:91.66px;font-size:11.8px;color:#2b3640;font-weight:400;">10</div>
<div class="t" style="left:1318.5px;width:100px;text-align:right;top:91.66px;font-size:11.8px;color:#2b3640;font-weight:400;">10</div>
<div class="t" style="left:1443.5px;width:100px;text-align:right;top:91.66px;font-size:11.8px;color:#2b3640;font-weight:400;">10</div>
<div class="a" style="left:0px;top:114px;width:1783px;height:30px;background:#fff;"></div>
<div class="a" style="left:0px;top:144px;width:1783px;height:1px;background:#eeeeee;"></div>
<div class="a" style="left:49px;top:114px;width:1px;height:30px;background:#efefef;"></div>
<div class="a" style="left:174px;top:114px;width:1px;height:30px;background:#efefef;"></div>
<div class="a" style="left:299px;top:114px;width:1px;height:30px;background:#efefef;"></div>
<div class="a" style="left:424px;top:114px;width:1px;height:30px;background:#efefef;"></div>
<div class="a" style="left:549px;top:114px;width:1px;height:30px;background:#efefef;"></div>
<div class="a" style="left:674px;top:114px;width:1px;height:30px;background:#efefef;"></div>
<div class="a" style="left:799px;top:114px;width:1px;height:30px;background:#efefef;"></div>
<div class="a" style="left:924px;top:114px;width:1px;height:30px;background:#efefef;"></div>
<div class="a" style="left:1049px;top:114px;width:1px;height:30px;background:#efefef;"></div>
<div class="a" style="left:1174px;top:114px;width:1px;height:30px;background:#efefef;"></div>
<div class="a" style="left:1299px;top:114px;width:1px;height:30px;background:#efefef;"></div>
<div class="a" style="left:1424px;top:114px;width:1px;height:30px;background:#efefef;"></div>
<div class="a" style="left:1549px;top:114px;width:1px;height:30px;background:#efefef;"></div>
<div class="t" style="left:-175.5px;width:400px;text-align:center;top:123.01px;font-size:11.8px;color:#2b2b2b;font-weight:400;">3</div>
<div class="t" style="left:56px;top:123.18px;font-size:11.6px;color:#2b3640;font-weight:400;">N-SMSMT</div>
<div class="t" style="left:181px;top:123.18px;font-size:11.6px;color:#2b3640;font-weight:400;">CDR DATA POSTP...</div>
<div class="t" style="left:306px;top:123.01px;font-size:11.8px;color:#2b3640;font-weight:400;">Outbound</div>
<div class="t" style="left:1193.5px;width:100px;text-align:right;top:123.01px;font-size:11.8px;color:#2b3640;font-weight:400;">10</div>
<div class="t" style="left:1318.5px;width:100px;text-align:right;top:123.01px;font-size:11.8px;color:#2b3640;font-weight:400;">10</div>
<div class="t" style="left:1443.5px;width:100px;text-align:right;top:123.01px;font-size:11.8px;color:#2b3640;font-weight:400;">10</div>
<div class="a" style="left:0px;top:145px;width:1783px;height:31px;background:#f7f7f7;"></div>
<div class="a" style="left:0px;top:176px;width:1783px;height:1px;background:#eeeeee;"></div>
<div class="a" style="left:49px;top:145px;width:1px;height:31px;background:#efefef;"></div>
<div class="a" style="left:174px;top:145px;width:1px;height:31px;background:#efefef;"></div>
<div class="a" style="left:299px;top:145px;width:1px;height:31px;background:#efefef;"></div>
<div class="a" style="left:424px;top:145px;width:1px;height:31px;background:#efefef;"></div>
<div class="a" style="left:549px;top:145px;width:1px;height:31px;background:#efefef;"></div>
<div class="a" style="left:674px;top:145px;width:1px;height:31px;background:#efefef;"></div>
<div class="a" style="left:799px;top:145px;width:1px;height:31px;background:#efefef;"></div>
<div class="a" style="left:924px;top:145px;width:1px;height:31px;background:#efefef;"></div>
<div class="a" style="left:1049px;top:145px;width:1px;height:31px;background:#efefef;"></div>
<div class="a" style="left:1174px;top:145px;width:1px;height:31px;background:#efefef;"></div>
<div class="a" style="left:1299px;top:145px;width:1px;height:31px;background:#efefef;"></div>
<div class="a" style="left:1424px;top:145px;width:1px;height:31px;background:#efefef;"></div>
<div class="a" style="left:1549px;top:145px;width:1px;height:31px;background:#efefef;"></div>
<div class="t" style="left:-175.5px;width:400px;text-align:center;top:154.36px;font-size:11.8px;color:#2b2b2b;font-weight:400;">4</div>
<div class="t" style="left:56px;top:154.53px;font-size:11.6px;color:#2b3640;font-weight:400;">M-SMSMO</div>
<div class="t" style="left:181px;top:154.53px;font-size:11.6px;color:#2b3640;font-weight:400;">CDR DATA POSTP...</div>
<div class="t" style="left:306px;top:154.36px;font-size:11.8px;color:#2b3640;font-weight:400;">Outbound</div>
<div class="t" style="left:1193.5px;width:100px;text-align:right;top:154.36px;font-size:11.8px;color:#2b3640;font-weight:400;">10</div>
<div class="t" style="left:1318.5px;width:100px;text-align:right;top:154.36px;font-size:11.8px;color:#2b3640;font-weight:400;">10</div>
<div class="t" style="left:1443.5px;width:100px;text-align:right;top:154.36px;font-size:11.8px;color:#2b3640;font-weight:400;">10</div>
<div class="a" style="left:0px;top:177px;width:1783px;height:30px;background:#fff;"></div>
<div class="a" style="left:0px;top:207px;width:1783px;height:1px;background:#eeeeee;"></div>
<div class="a" style="left:49px;top:177px;width:1px;height:30px;background:#efefef;"></div>
<div class="a" style="left:174px;top:177px;width:1px;height:30px;background:#efefef;"></div>
<div class="a" style="left:299px;top:177px;width:1px;height:30px;background:#efefef;"></div>
<div class="a" style="left:424px;top:177px;width:1px;height:30px;background:#efefef;"></div>
<div class="a" style="left:549px;top:177px;width:1px;height:30px;background:#efefef;"></div>
<div class="a" style="left:674px;top:177px;width:1px;height:30px;background:#efefef;"></div>
<div class="a" style="left:799px;top:177px;width:1px;height:30px;background:#efefef;"></div>
<div class="a" style="left:924px;top:177px;width:1px;height:30px;background:#efefef;"></div>
<div class="a" style="left:1049px;top:177px;width:1px;height:30px;background:#efefef;"></div>
<div class="a" style="left:1174px;top:177px;width:1px;height:30px;background:#efefef;"></div>
<div class="a" style="left:1299px;top:177px;width:1px;height:30px;background:#efefef;"></div>
<div class="a" style="left:1424px;top:177px;width:1px;height:30px;background:#efefef;"></div>
<div class="a" style="left:1549px;top:177px;width:1px;height:30px;background:#efefef;"></div>
<div class="t" style="left:-175.5px;width:400px;text-align:center;top:185.71px;font-size:11.8px;color:#2b2b2b;font-weight:400;">5</div>
<div class="t" style="left:56px;top:185.88px;font-size:11.6px;color:#2b3640;font-weight:400;">G-GPRS</div>
<div class="t" style="left:181px;top:185.88px;font-size:11.6px;color:#2b3640;font-weight:400;">CDR DATA POSTP...</div>
<div class="t" style="left:306px;top:185.71px;font-size:11.8px;color:#2b3640;font-weight:400;">Outbound</div>
<div class="t" style="left:1193.5px;width:100px;text-align:right;top:185.71px;font-size:11.8px;color:#2b3640;font-weight:400;">10</div>
<div class="t" style="left:1318.5px;width:100px;text-align:right;top:185.71px;font-size:11.8px;color:#2b3640;font-weight:400;">10</div>
<div class="t" style="left:1443.5px;width:100px;text-align:right;top:185.71px;font-size:11.8px;color:#2b3640;font-weight:400;">10</div>
<div class="a" style="left:0px;top:208px;width:1783px;height:30px;background:#f7f7f7;"></div>
<div class="a" style="left:0px;top:238px;width:1783px;height:1px;background:#eeeeee;"></div>
<div class="a" style="left:49px;top:208px;width:1px;height:30px;background:#efefef;"></div>
<div class="a" style="left:174px;top:208px;width:1px;height:30px;background:#efefef;"></div>
<div class="a" style="left:299px;top:208px;width:1px;height:30px;background:#efefef;"></div>
<div class="a" style="left:424px;top:208px;width:1px;height:30px;background:#efefef;"></div>
<div class="a" style="left:549px;top:208px;width:1px;height:30px;background:#efefef;"></div>
<div class="a" style="left:674px;top:208px;width:1px;height:30px;background:#efefef;"></div>
<div class="a" style="left:799px;top:208px;width:1px;height:30px;background:#efefef;"></div>
<div class="a" style="left:924px;top:208px;width:1px;height:30px;background:#efefef;"></div>
<div class="a" style="left:1049px;top:208px;width:1px;height:30px;background:#efefef;"></div>
<div class="a" style="left:1174px;top:208px;width:1px;height:30px;background:#efefef;"></div>
<div class="a" style="left:1299px;top:208px;width:1px;height:30px;background:#efefef;"></div>
<div class="a" style="left:1424px;top:208px;width:1px;height:30px;background:#efefef;"></div>
<div class="a" style="left:1549px;top:208px;width:1px;height:30px;background:#efefef;"></div>
<div class="t" style="left:-175.5px;width:400px;text-align:center;top:217.06px;font-size:11.8px;color:#2b2b2b;font-weight:400;">6</div>
<div class="t" style="left:56px;top:217.23px;font-size:11.6px;color:#2b3640;font-weight:400;">E-LTE</div>
<div class="t" style="left:181px;top:217.23px;font-size:11.6px;color:#2b3640;font-weight:400;">CDR DATA POSTP...</div>
<div class="t" style="left:306px;top:217.06px;font-size:11.8px;color:#2b3640;font-weight:400;">Outbound</div>
<div class="t" style="left:556px;top:217.06px;font-size:11.8px;color:#2b3640;font-weight:400;">6</div>
<div class="t" style="left:1193.5px;width:100px;text-align:right;top:217.06px;font-size:11.8px;color:#2b3640;font-weight:400;">10</div>
<div class="t" style="left:1318.5px;width:100px;text-align:right;top:217.06px;font-size:11.8px;color:#2b3640;font-weight:400;">10</div>
<div class="t" style="left:1443.5px;width:100px;text-align:right;top:217.06px;font-size:11.8px;color:#2b3640;font-weight:400;">10</div>
<div class="a" style="left:0px;top:239px;width:1783px;height:31px;background:#fff;"></div>
<div class="a" style="left:0px;top:270px;width:1783px;height:1px;background:#eeeeee;"></div>
<div class="a" style="left:49px;top:239px;width:1px;height:31px;background:#efefef;"></div>
<div class="a" style="left:174px;top:239px;width:1px;height:31px;background:#efefef;"></div>
<div class="a" style="left:299px;top:239px;width:1px;height:31px;background:#efefef;"></div>
<div class="a" style="left:424px;top:239px;width:1px;height:31px;background:#efefef;"></div>
<div class="a" style="left:549px;top:239px;width:1px;height:31px;background:#efefef;"></div>
<div class="a" style="left:674px;top:239px;width:1px;height:31px;background:#efefef;"></div>
<div class="a" style="left:799px;top:239px;width:1px;height:31px;background:#efefef;"></div>
<div class="a" style="left:924px;top:239px;width:1px;height:31px;background:#efefef;"></div>
<div class="a" style="left:1049px;top:239px;width:1px;height:31px;background:#efefef;"></div>
<div class="a" style="left:1174px;top:239px;width:1px;height:31px;background:#efefef;"></div>
<div class="a" style="left:1299px;top:239px;width:1px;height:31px;background:#efefef;"></div>
<div class="a" style="left:1424px;top:239px;width:1px;height:31px;background:#efefef;"></div>
<div class="a" style="left:1549px;top:239px;width:1px;height:31px;background:#efefef;"></div>
<div class="t" style="left:-175.5px;width:400px;text-align:center;top:248.41px;font-size:11.8px;color:#2b2b2b;font-weight:400;">7</div>
<div class="t" style="left:56px;top:248.58px;font-size:11.6px;color:#2b3640;font-weight:400;">1231-Test1</div>
<div class="t" style="left:181px;top:248.58px;font-size:11.6px;color:#2b3640;font-weight:400;">CDR DATA POSTP...</div>
<div class="t" style="left:306px;top:248.41px;font-size:11.8px;color:#2b3640;font-weight:400;">Outbound</div>
<div class="t" style="left:556px;top:248.41px;font-size:11.8px;color:#2b3640;font-weight:400;">0</div>
<div class="a" style="left:0px;top:271px;width:1783px;height:30px;background:#f7f7f7;"></div>
<div class="a" style="left:0px;top:301px;width:1783px;height:1px;background:#eeeeee;"></div>
<div class="a" style="left:49px;top:271px;width:1px;height:30px;background:#efefef;"></div>
<div class="a" style="left:174px;top:271px;width:1px;height:30px;background:#efefef;"></div>
<div class="a" style="left:299px;top:271px;width:1px;height:30px;background:#efefef;"></div>
<div class="a" style="left:424px;top:271px;width:1px;height:30px;background:#efefef;"></div>
<div class="a" style="left:549px;top:271px;width:1px;height:30px;background:#efefef;"></div>
<div class="a" style="left:674px;top:271px;width:1px;height:30px;background:#efefef;"></div>
<div class="a" style="left:799px;top:271px;width:1px;height:30px;background:#efefef;"></div>
<div class="a" style="left:924px;top:271px;width:1px;height:30px;background:#efefef;"></div>
<div class="a" style="left:1049px;top:271px;width:1px;height:30px;background:#efefef;"></div>
<div class="a" style="left:1174px;top:271px;width:1px;height:30px;background:#efefef;"></div>
<div class="a" style="left:1299px;top:271px;width:1px;height:30px;background:#efefef;"></div>
<div class="a" style="left:1424px;top:271px;width:1px;height:30px;background:#efefef;"></div>
<div class="a" style="left:1549px;top:271px;width:1px;height:30px;background:#efefef;"></div>
<div class="a" style="left:1619px;top:0px;width:6px;height:274px;background:linear-gradient(90deg,rgba(0,0,0,0),rgba(0,0,0,0.07));"></div>
<div class="a" style="left:1625px;top:50px;width:157px;height:224px;background:transparent;"></div>
<svg style="left:1630px;top:61.0px" width="13" height="11" viewBox="0 0 13 11"><ellipse cx="6.6" cy="5.6" rx="5.2" ry="4.4" fill="none" stroke="#222" stroke-width="1"/><circle cx="6.6" cy="5.6" r="2" fill="none" stroke="#222" stroke-width="1"/></svg>
<svg style="left:1653px;top:60.0px" width="12" height="13" viewBox="0 0 12 13"><path d="M1.6 9.8 L1.5 7.6 L8.2 1 Q9 0.3 9.8 1 L10.6 1.8 Q11.3 2.6 10.6 3.4 L3.9 10 Z M7.3 2 L9.6 4.3" fill="none" stroke="#222" stroke-width="1"/><path d="M0.5 12.3 H11" stroke="#222" stroke-width="1.1"/></svg>
<svg style="left:1675px;top:61.0px" width="12" height="12" viewBox="0 0 12 12"><path d="M4 3.5 V2.2 Q4 0.5 5.7 0.5 H9 Q10.6 0.5 10.6 2.2 V5.6 Q10.6 7.3 9 7.3 H7.3" fill="none" stroke="#222" stroke-width="1"/><rect x="0.5" y="3.8" width="6.8" height="7" rx="1.7" fill="none" stroke="#222" stroke-width="1"/></svg>
<svg style="left:1697px;top:61.0px" width="10" height="11" viewBox="0 0 10 11"><path d="M2.1 5.6 V2.6 Q2.1 0.6 5 0.6 Q7.9 0.6 7.9 2.6 V3.2" fill="none" stroke="#111" stroke-width="1.2"/><rect x="0.2" y="5.5" width="9.4" height="5.3" rx="0.5" fill="#111"/><rect x="4.4" y="7.4" width="1.2" height="1.4" fill="#ddd"/></svg>
<svg style="left:1719px;top:61.0px" width="10" height="11" viewBox="0 0 10 11"><path d="M1 2.6 Q2 0.5 5 0.5 Q8 0.5 9 2.6 Z" fill="#f59bb0"/><path d="M0.3 2.7 H9.7" stroke="#e4204a" stroke-width="1"/><path d="M1.5 3 L1.9 10.5 H8.1 L8.5 3" fill="none" stroke="#e4204a" stroke-width="1.1"/></svg>
<div class="a" style="left:1755px;top:59.0px;width:14px;height:14px;background:#fff;border:1px solid #d9d9d9;border-radius:3px"></div>
<svg style="left:1630px;top:92.35000000000002px" width="13" height="11" viewBox="0 0 13 11"><ellipse cx="6.6" cy="5.6" rx="5.2" ry="4.4" fill="none" stroke="#222" stroke-width="1"/><circle cx="6.6" cy="5.6" r="2" fill="none" stroke="#222" stroke-width="1"/></svg>
<svg style="left:1653px;top:91.35000000000002px" width="12" height="13" viewBox="0 0 12 13"><path d="M1.6 9.8 L1.5 7.6 L8.2 1 Q9 0.3 9.8 1 L10.6 1.8 Q11.3 2.6 10.6 3.4 L3.9 10 Z M7.3 2 L9.6 4.3" fill="none" stroke="#222" stroke-width="1"/><path d="M0.5 12.3 H11" stroke="#222" stroke-width="1.1"/></svg>
<svg style="left:1675px;top:92.35000000000002px" width="12" height="12" viewBox="0 0 12 12"><path d="M4 3.5 V2.2 Q4 0.5 5.7 0.5 H9 Q10.6 0.5 10.6 2.2 V5.6 Q10.6 7.3 9 7.3 H7.3" fill="none" stroke="#222" stroke-width="1"/><rect x="0.5" y="3.8" width="6.8" height="7" rx="1.7" fill="none" stroke="#222" stroke-width="1"/></svg>
<svg style="left:1697px;top:92.35000000000002px" width="10" height="11" viewBox="0 0 10 11"><path d="M2.1 5.6 V2.6 Q2.1 0.6 5 0.6 Q7.9 0.6 7.9 2.6 V3.2" fill="none" stroke="#111" stroke-width="1.2"/><rect x="0.2" y="5.5" width="9.4" height="5.3" rx="0.5" fill="#111"/><rect x="4.4" y="7.4" width="1.2" height="1.4" fill="#ddd"/></svg>
<svg style="left:1719px;top:92.35000000000002px" width="10" height="11" viewBox="0 0 10 11"><path d="M1 2.6 Q2 0.5 5 0.5 Q8 0.5 9 2.6 Z" fill="#f59bb0"/><path d="M0.3 2.7 H9.7" stroke="#e4204a" stroke-width="1"/><path d="M1.5 3 L1.9 10.5 H8.1 L8.5 3" fill="none" stroke="#e4204a" stroke-width="1.1"/></svg>
<div class="a" style="left:1755px;top:90.35px;width:14px;height:14px;background:#fff;border:1px solid #d9d9d9;border-radius:3px"></div>
<svg style="left:1630px;top:123.70000000000005px" width="13" height="11" viewBox="0 0 13 11"><ellipse cx="6.6" cy="5.6" rx="5.2" ry="4.4" fill="none" stroke="#222" stroke-width="1"/><circle cx="6.6" cy="5.6" r="2" fill="none" stroke="#222" stroke-width="1"/></svg>
<svg style="left:1653px;top:122.70000000000005px" width="12" height="13" viewBox="0 0 12 13"><path d="M1.6 9.8 L1.5 7.6 L8.2 1 Q9 0.3 9.8 1 L10.6 1.8 Q11.3 2.6 10.6 3.4 L3.9 10 Z M7.3 2 L9.6 4.3" fill="none" stroke="#222" stroke-width="1"/><path d="M0.5 12.3 H11" stroke="#222" stroke-width="1.1"/></svg>
<svg style="left:1675px;top:123.70000000000005px" width="12" height="12" viewBox="0 0 12 12"><path d="M4 3.5 V2.2 Q4 0.5 5.7 0.5 H9 Q10.6 0.5 10.6 2.2 V5.6 Q10.6 7.3 9 7.3 H7.3" fill="none" stroke="#222" stroke-width="1"/><rect x="0.5" y="3.8" width="6.8" height="7" rx="1.7" fill="none" stroke="#222" stroke-width="1"/></svg>
<svg style="left:1697px;top:123.70000000000005px" width="10" height="11" viewBox="0 0 10 11"><path d="M2.1 5.6 V2.6 Q2.1 0.6 5 0.6 Q7.9 0.6 7.9 2.6 V3.2" fill="none" stroke="#111" stroke-width="1.2"/><rect x="0.2" y="5.5" width="9.4" height="5.3" rx="0.5" fill="#111"/><rect x="4.4" y="7.4" width="1.2" height="1.4" fill="#ddd"/></svg>
<svg style="left:1719px;top:123.70000000000005px" width="10" height="11" viewBox="0 0 10 11"><path d="M1 2.6 Q2 0.5 5 0.5 Q8 0.5 9 2.6 Z" fill="#f59bb0"/><path d="M0.3 2.7 H9.7" stroke="#e4204a" stroke-width="1"/><path d="M1.5 3 L1.9 10.5 H8.1 L8.5 3" fill="none" stroke="#e4204a" stroke-width="1.1"/></svg>
<div class="a" style="left:1755px;top:121.69999999999999px;width:14px;height:14px;background:#fff;border:1px solid #d9d9d9;border-radius:3px"></div>
<svg style="left:1630px;top:155.04999999999995px" width="13" height="11" viewBox="0 0 13 11"><ellipse cx="6.6" cy="5.6" rx="5.2" ry="4.4" fill="none" stroke="#222" stroke-width="1"/><circle cx="6.6" cy="5.6" r="2" fill="none" stroke="#222" stroke-width="1"/></svg>
<svg style="left:1653px;top:154.04999999999995px" width="12" height="13" viewBox="0 0 12 13"><path d="M1.6 9.8 L1.5 7.6 L8.2 1 Q9 0.3 9.8 1 L10.6 1.8 Q11.3 2.6 10.6 3.4 L3.9 10 Z M7.3 2 L9.6 4.3" fill="none" stroke="#222" stroke-width="1"/><path d="M0.5 12.3 H11" stroke="#222" stroke-width="1.1"/></svg>
<svg style="left:1675px;top:155.04999999999995px" width="12" height="12" viewBox="0 0 12 12"><path d="M4 3.5 V2.2 Q4 0.5 5.7 0.5 H9 Q10.6 0.5 10.6 2.2 V5.6 Q10.6 7.3 9 7.3 H7.3" fill="none" stroke="#222" stroke-width="1"/><rect x="0.5" y="3.8" width="6.8" height="7" rx="1.7" fill="none" stroke="#222" stroke-width="1"/></svg>
<svg style="left:1697px;top:155.04999999999995px" width="10" height="11" viewBox="0 0 10 11"><path d="M2.1 5.6 V2.6 Q2.1 0.6 5 0.6 Q7.9 0.6 7.9 2.6 V3.2" fill="none" stroke="#111" stroke-width="1.2"/><rect x="0.2" y="5.5" width="9.4" height="5.3" rx="0.5" fill="#111"/><rect x="4.4" y="7.4" width="1.2" height="1.4" fill="#ddd"/></svg>
<svg style="left:1719px;top:155.04999999999995px" width="10" height="11" viewBox="0 0 10 11"><path d="M1 2.6 Q2 0.5 5 0.5 Q8 0.5 9 2.6 Z" fill="#f59bb0"/><path d="M0.3 2.7 H9.7" stroke="#e4204a" stroke-width="1"/><path d="M1.5 3 L1.9 10.5 H8.1 L8.5 3" fill="none" stroke="#e4204a" stroke-width="1.1"/></svg>
<div class="a" style="left:1755px;top:153.05px;width:14px;height:14px;background:#fff;border:1px solid #d9d9d9;border-radius:3px"></div>
<svg style="left:1630px;top:186.39999999999998px" width="13" height="11" viewBox="0 0 13 11"><ellipse cx="6.6" cy="5.6" rx="5.2" ry="4.4" fill="none" stroke="#222" stroke-width="1"/><circle cx="6.6" cy="5.6" r="2" fill="none" stroke="#222" stroke-width="1"/></svg>
<svg style="left:1653px;top:185.39999999999998px" width="12" height="13" viewBox="0 0 12 13"><path d="M1.6 9.8 L1.5 7.6 L8.2 1 Q9 0.3 9.8 1 L10.6 1.8 Q11.3 2.6 10.6 3.4 L3.9 10 Z M7.3 2 L9.6 4.3" fill="none" stroke="#222" stroke-width="1"/><path d="M0.5 12.3 H11" stroke="#222" stroke-width="1.1"/></svg>
<svg style="left:1675px;top:186.39999999999998px" width="12" height="12" viewBox="0 0 12 12"><path d="M4 3.5 V2.2 Q4 0.5 5.7 0.5 H9 Q10.6 0.5 10.6 2.2 V5.6 Q10.6 7.3 9 7.3 H7.3" fill="none" stroke="#222" stroke-width="1"/><rect x="0.5" y="3.8" width="6.8" height="7" rx="1.7" fill="none" stroke="#222" stroke-width="1"/></svg>
<svg style="left:1697px;top:186.39999999999998px" width="10" height="11" viewBox="0 0 10 11"><path d="M2.1 5.6 V2.6 Q2.1 0.6 5 0.6 Q7.9 0.6 7.9 2.6 V3.2" fill="none" stroke="#111" stroke-width="1.2"/><rect x="0.2" y="5.5" width="9.4" height="5.3" rx="0.5" fill="#111"/><rect x="4.4" y="7.4" width="1.2" height="1.4" fill="#ddd"/></svg>
<svg style="left:1719px;top:186.39999999999998px" width="10" height="11" viewBox="0 0 10 11"><path d="M1 2.6 Q2 0.5 5 0.5 Q8 0.5 9 2.6 Z" fill="#f59bb0"/><path d="M0.3 2.7 H9.7" stroke="#e4204a" stroke-width="1"/><path d="M1.5 3 L1.9 10.5 H8.1 L8.5 3" fill="none" stroke="#e4204a" stroke-width="1.1"/></svg>
<div class="a" style="left:1755px;top:184.4px;width:14px;height:14px;background:#fff;border:1px solid #d9d9d9;border-radius:3px"></div>
<svg style="left:1630px;top:217.75px" width="13" height="11" viewBox="0 0 13 11"><ellipse cx="6.6" cy="5.6" rx="5.2" ry="4.4" fill="none" stroke="#222" stroke-width="1"/><circle cx="6.6" cy="5.6" r="2" fill="none" stroke="#222" stroke-width="1"/></svg>
<svg style="left:1653px;top:216.75px" width="12" height="13" viewBox="0 0 12 13"><path d="M1.6 9.8 L1.5 7.6 L8.2 1 Q9 0.3 9.8 1 L10.6 1.8 Q11.3 2.6 10.6 3.4 L3.9 10 Z M7.3 2 L9.6 4.3" fill="none" stroke="#222" stroke-width="1"/><path d="M0.5 12.3 H11" stroke="#222" stroke-width="1.1"/></svg>
<svg style="left:1675px;top:217.75px" width="12" height="12" viewBox="0 0 12 12"><path d="M4 3.5 V2.2 Q4 0.5 5.7 0.5 H9 Q10.6 0.5 10.6 2.2 V5.6 Q10.6 7.3 9 7.3 H7.3" fill="none" stroke="#222" stroke-width="1"/><rect x="0.5" y="3.8" width="6.8" height="7" rx="1.7" fill="none" stroke="#222" stroke-width="1"/></svg>
<svg style="left:1697px;top:217.75px" width="10" height="11" viewBox="0 0 10 11"><path d="M2.1 5.6 V2.6 Q2.1 0.6 5 0.6 Q7.9 0.6 7.9 2.6 V3.2" fill="none" stroke="#111" stroke-width="1.2"/><rect x="0.2" y="5.5" width="9.4" height="5.3" rx="0.5" fill="#111"/><rect x="4.4" y="7.4" width="1.2" height="1.4" fill="#ddd"/></svg>
<svg style="left:1719px;top:217.75px" width="10" height="11" viewBox="0 0 10 11"><path d="M1 2.6 Q2 0.5 5 0.5 Q8 0.5 9 2.6 Z" fill="#f59bb0"/><path d="M0.3 2.7 H9.7" stroke="#e4204a" stroke-width="1"/><path d="M1.5 3 L1.9 10.5 H8.1 L8.5 3" fill="none" stroke="#e4204a" stroke-width="1.1"/></svg>
<div class="a" style="left:1755px;top:215.75px;width:14px;height:14px;background:#fff;border:1px solid #d9d9d9;border-radius:3px"></div>
<svg style="left:1630px;top:249.10000000000002px" width="13" height="11" viewBox="0 0 13 11"><ellipse cx="6.6" cy="5.6" rx="5.2" ry="4.4" fill="none" stroke="#222" stroke-width="1"/><circle cx="6.6" cy="5.6" r="2" fill="none" stroke="#222" stroke-width="1"/></svg>
<svg style="left:1653px;top:248.10000000000002px" width="12" height="13" viewBox="0 0 12 13"><path d="M1.6 9.8 L1.5 7.6 L8.2 1 Q9 0.3 9.8 1 L10.6 1.8 Q11.3 2.6 10.6 3.4 L3.9 10 Z M7.3 2 L9.6 4.3" fill="none" stroke="#222" stroke-width="1"/><path d="M0.5 12.3 H11" stroke="#222" stroke-width="1.1"/></svg>
<svg style="left:1675px;top:249.10000000000002px" width="12" height="12" viewBox="0 0 12 12"><path d="M4 3.5 V2.2 Q4 0.5 5.7 0.5 H9 Q10.6 0.5 10.6 2.2 V5.6 Q10.6 7.3 9 7.3 H7.3" fill="none" stroke="#222" stroke-width="1"/><rect x="0.5" y="3.8" width="6.8" height="7" rx="1.7" fill="none" stroke="#222" stroke-width="1"/></svg>
<svg style="left:1697px;top:249.10000000000002px" width="10" height="11" viewBox="0 0 10 11"><path d="M2.1 5.6 V2.6 Q2.1 0.6 5 0.6 Q7.9 0.6 7.9 2.6 V3.2" fill="none" stroke="#111" stroke-width="1.2"/><rect x="0.2" y="5.5" width="9.4" height="5.3" rx="0.5" fill="#111"/><rect x="4.4" y="7.4" width="1.2" height="1.4" fill="#ddd"/></svg>
<svg style="left:1719px;top:249.10000000000002px" width="10" height="11" viewBox="0 0 10 11"><path d="M1 2.6 Q2 0.5 5 0.5 Q8 0.5 9 2.6 Z" fill="#f59bb0"/><path d="M0.3 2.7 H9.7" stroke="#e4204a" stroke-width="1"/><path d="M1.5 3 L1.9 10.5 H8.1 L8.5 3" fill="none" stroke="#e4204a" stroke-width="1.1"/></svg>
<div class="a" style="left:1755px;top:247.10000000000002px;width:14px;height:14px;background:#fff;border:1px solid #d9d9d9;border-radius:3px"></div>
</div>
<div class="a" style="left:61px;top:942px;width:1858px;height:28px;background:#fff;"></div>
<div class="a" style="left:61px;top:942px;width:6px;height:28px;background:linear-gradient(90deg,#d5d8db,rgba(255,255,255,0));"></div>
<div class="a" style="left:61px;top:226px;width:6px;height:43px;background:linear-gradient(90deg,#e2e4e6,rgba(255,255,255,0));"></div>
<div class="t" style="right:11px;top:950.10px;font-size:11.7px;color:#6b6b6b;font-weight:400;">@2023 Powered by <b style="color:#111">VTT</b></div>
<div class="a" style="left:1890px;top:576px;width:29px;height:30px;background:#ee0033;border-radius:4px 0 0 4px"></div>
<svg style="left:1898px;top:584px" width="13" height="13" viewBox="0 0 13 13"><path d="M6.5 0.8 L8 2.2 L10 1.9 L10.4 3.9 L12.2 5 L11.3 6.5 L12.2 8 L10.4 9.1 L10 11.1 L8 10.8 L6.5 12.2 L5 10.8 L3 11.1 L2.6 9.1 L0.8 8 L1.7 6.5 L0.8 5 L2.6 3.9 L3 1.9 L5 2.2 Z" fill="none" stroke="#fff" stroke-width="1"/><circle cx="6.5" cy="6.5" r="2" fill="none" stroke="#fff" stroke-width="1"/></svg>
<div class="t" style="left:1553px;top:875.84px;font-size:25px;color:rgba(135,135,135,0.55);font-weight:400;">Activate Windows</div>
<div class="t" style="left:1553px;top:908.76px;font-size:18px;color:rgba(135,135,135,0.55);font-weight:400;">Go to Settings to activate Windows.</div>
<div class="a" style="left:1580px;top:276px;width:320px;height:62px;background:#fff;border-radius:6px;box-shadow:0 3px 8px rgba(0,0,0,0.14);border-left:3px solid #52c41a"></div>
<svg style="left:1597px;top:298px" width="21" height="21" viewBox="0 0 21 21"><circle cx="10.5" cy="10.5" r="9.6" fill="none" stroke="#4fc85a" stroke-width="1.6"/><path d="M6.5 10.5 L9.3 13.3 L14.5 7.7" fill="none" stroke="#4fc85a" stroke-width="1.6"/></svg>
<div class="t" style="left:1635px;top:289.83px;font-size:13.2px;color:#55c65f;font-weight:400;">Success</div>
<div class="t" style="left:1635px;top:311.97px;font-size:11.85px;color:#55c65f;font-weight:400;">Add new call type mapping successfully!</div>
<div class="a" style="left:1887px;top:267px;width:17px;height:17px;background:#fff;border-radius:50%;box-shadow:0 1px 3px rgba(0,0,0,0.18)"></div>
<svg style="left:1891px;top:271px" width="9" height="9" viewBox="0 0 9 9"><path d="M0.5 0.5 L8.5 8.5 M8.5 0.5 L0.5 8.5" stroke="#666" stroke-width="1"/></svg>
<div class="a" style="left:1564px;top:252px;width:350.5px;height:100.5px;background:transparent;border:4px solid #ff0000;border-radius:3px"></div>

<!-- ===== Taskbars ===== -->
<div class="a" style="left:0;top:970px;width:1919px;height:50px;background:#101010"></div>
<div class="a" style="left:0;top:1020px;width:1919px;height:59px;background:linear-gradient(90deg,#cde8c7 0%,#d4ebc1 22%,#d9edbe 50%,#dbefbb 100%);border-top:1px solid #a8b8a4"></div>
<svg style="left:20px;top:985px" width="20" height="20" viewBox="0 0 20 20"><path d="M0 2.8 L8.2 1.6 V9.5 H0 Z M9.2 1.5 L20 0 V9.5 H9.2 Z M0 10.5 H8.2 V18.4 L0 17.2 Z M9.2 10.5 H20 V20 L9.2 18.5 Z" fill="#fff"/></svg>
<svg style="left:80px;top:985px" width="21" height="21" viewBox="0 0 21 21"><circle cx="12.5" cy="8.5" r="7.2" fill="none" stroke="#fff" stroke-width="1.5"/><path d="M7.3 13.7 L1 20" stroke="#fff" stroke-width="1.7"/></svg>
<div class="a" style="left:129px;top:1017px;width:190px;height:3px;background:#76b9ed;"></div>
<svg style="left:141px;top:983px" width="19" height="26" viewBox="0 0 19 26"><path d="M3 3 L15 0.5 Q18 0 18 3 V20 Q18 22 15.5 22.5 L3 25 Q1 25.5 1 23 V5 Q1 3.4 3 3 Z" fill="#f0c94c"/><path d="M6 5 H17 Q18 5 18 6 V21 Q18 22 17 22 H6 Z" fill="#fde58a"/></svg>
<div class="t" style="left:171px;top:988.30px;font-size:15px;color:#fff;">Call type mapping [...</div>
<svg style="left:340px;top:980px" width="30" height="30" viewBox="0 0 30 30"><defs><linearGradient id="eg340" x1="0" y1="1" x2="1" y2="0"><stop offset="0" stop-color="#0c59a4"/><stop offset="0.5" stop-color="#1b9de2"/><stop offset="1" stop-color="#5ad17a"/></linearGradient></defs><path d="M27.5 20.5 Q24 27.5 15.5 28 Q5 28 2 18 Q0.5 8 8.5 3.5 Q15 0 22 3 Q28.5 6.5 28.5 14 Q28.5 18 25 18.5 H13 Q12.5 23.5 19 24 Q24 24 27.5 20.5 Z" fill="url(#eg340)"/><path d="M2.5 15 Q3 8 10 6 Q17 5 19 11 Q13 9 10 12.5 Q7 16 9.5 22 Q11.5 26.5 15.5 28 Q5 28 2.5 15 Z" fill="#0f4d8c" opacity="0.85"/></svg>
<div class="a" style="left:387px;top:970px;width:200px;height:47px;background:#2a2a2a;"></div>
<div class="a" style="left:387px;top:1017px;width:200px;height:3px;background:#76b9ed;"></div>
<svg style="left:400px;top:980px" width="30" height="30" viewBox="0 0 30 30"><circle cx="15" cy="15" r="14.5" fill="#db4437"/><path d="M15 15 L2.4 22.3 A14.5 14.5 0 0 1 2.4 7.7 Z" fill="#0f9d58"/><path d="M15 15 L27.6 7.7 A14.5 14.5 0 0 1 15 29.5 A14.5 14.5 0 0 1 2.4 22.3 Z" fill="#0f9d58"/><path d="M15 15 L27.6 7.7 A14.5 14.5 0 0 1 15 29.5 Z" fill="#ffcd40"/><path d="M15 15 L2.4 7.7 A14.5 14.5 0 0 1 27.6 7.7 Z" fill="#db4437"/><circle cx="15" cy="15" r="6.5" fill="#fff"/><circle cx="15" cy="15" r="5.2" fill="#1a73e8"/></svg>
<div class="t" style="left:434px;top:988.56px;font-size:14.7px;color:#fff;">Viettel Roaming - G...</div>
<div class="a" style="left:593px;top:1017px;width:190px;height:3px;background:#76b9ed;"></div>
<div class="a" style="left:601px;top:980px;width:30px;height:30px;background:#fff;border-radius:3px"></div>
<svg style="left:601px;top:980px" width="30" height="30" viewBox="0 0 30 30"><path d="M8 27 Q5 18 9 10 Q12 4 17 5 Q22 6 21 12 Q20 18 23 24 Q20 28 14 28 Z" fill="#6b4a35"/><path d="M12 10 Q15 8 18 10 Q17 16 14 16 Q11 15 12 10 Z" fill="#e9dccf"/><circle cx="23" cy="23" r="6" fill="#3aa7c9"/><text x="23" y="25.5" font-size="6" fill="#fff" text-anchor="middle" font-family="Liberation Sans">CE</text></svg>
<div class="t" style="left:635px;top:989.15px;font-size:14px;color:#fff;">DBeaver 21.0.0 - cal...</div>
<div class="a" style="left:794px;top:1017px;width:189px;height:3px;background:#76b9ed;"></div>
<svg style="left:803px;top:981px" width="28" height="28" viewBox="0 0 28 28"><rect x="9" y="2" width="18" height="24" rx="2" fill="#fff" stroke="#1d7044" stroke-width="1.5"/><path d="M16 7 H25 M16 11 H25 M16 15 H25 M16 19 H25 M20 4 V24" stroke="#1d7044" stroke-width="1.2"/><path d="M0 3.5 L16 1 V27 L0 24.5 Z" fill="#1d7044"/><path d="M4 8.5 L11 19.5 M11 8.5 L4 19.5" stroke="#fff" stroke-width="2.2"/></svg>
<div class="t" style="left:836px;top:989.49px;font-size:13.6px;color:#fff;">Roaming2.0_KBKT_...</div>
<svg style="left:1642px;top:990px" width="17" height="10" viewBox="0 0 17 10"><path d="M0.7 9.3 L8.5 1.3 L16.3 9.3" fill="none" stroke="#fff" stroke-width="1.4"/></svg>
<svg style="left:1670px;top:985px" width="21" height="20" viewBox="0 0 21 20"><g fill="none" stroke="#fff" stroke-width="1.3"><circle cx="10" cy="10" r="9"/><ellipse cx="10" cy="10" rx="4" ry="9"/><path d="M1 10 H19 M2.5 5.5 H17.5 M2.5 14.5 H14"/></g><circle cx="16.5" cy="15.5" r="4" fill="#101010" stroke="#fff" stroke-width="1.2"/><path d="M14 18 L19 13" stroke="#fff" stroke-width="1.1"/></svg>
<svg style="left:1700px;top:989px" width="20" height="14" viewBox="0 0 20 14"><path d="M0.7 4.5 H3.5 L8.3 0.8 V13.2 L3.5 9.5 H0.7 Z" fill="none" stroke="#fff" stroke-width="1.2"/><path d="M12 4 L18.5 10.5 M18.5 4 L12 10.5" stroke="#fff" stroke-width="1.2"/></svg>
<div class="t" style="left:1733.5px;top:989.83px;font-size:13.2px;color:#fff;">ENG</div>
<div class="t" style="left:1637.6px;width:200px;text-align:right;top:976.73px;font-size:13.9px;color:#fff;">6:29 PM</div>
<div class="t" style="left:1649.4px;width:200px;text-align:right;top:998.97px;font-size:14.8px;color:#fff;">10/30/2025</div>
<svg style="left:1869px;top:985px" width="21" height="20" viewBox="0 0 21 20"><path d="M0.7 0.7 H20.3 V15.5 H12.5 L10.5 18.5 L8.5 15.5 H0.7 Z" fill="none" stroke="#fff" stroke-width="1.3" stroke-linejoin="round"/></svg>
<div class="a" style="left:1914px;top:970px;width:1px;height:50px;background:#5a5a5a;"></div>
<svg style="left:475px;top:1036px" width="29" height="29" viewBox="0 0 29 29"><defs><linearGradient id="w11" x1="0" y1="0" x2="1" y2="1"><stop offset="0" stop-color="#3bc5f7"/><stop offset="1" stop-color="#0a6fd6"/></linearGradient></defs><rect x="0" y="0" width="13.8" height="13.8" rx="1" fill="url(#w11)"/><rect x="15.2" y="0" width="13.8" height="13.8" rx="1" fill="url(#w11)"/><rect x="0" y="15.2" width="13.8" height="13.8" rx="1" fill="url(#w11)"/><rect x="15.2" y="15.2" width="13.8" height="13.8" rx="1" fill="url(#w11)"/></svg>
<div class="a" style="left:522px;top:1031px;width:273px;height:38px;background:linear-gradient(90deg,#f3f8ec,#f6faee 60%,#f2f8e6);border-radius:19px;border:1px solid rgba(190,205,180,0.7)"></div>
<svg style="left:537px;top:1041px" width="18" height="18" viewBox="0 0 18 18"><circle cx="7.3" cy="7.3" r="6.2" fill="none" stroke="#1a1a1a" stroke-width="1.8"/><path d="M11.8 11.8 L17 17" stroke="#1a1a1a" stroke-width="2"/></svg>
<div class="t" style="left:567px;top:1043.66px;font-size:16px;color:#555;">Search</div>
<div class="a" style="left:822px;top:1036px;width:19px;height:20px;background:linear-gradient(135deg,#ffffff,#cfcfcf);border-radius:2px;box-shadow:0 0 1px rgba(0,0,0,.3)"></div>
<div class="a" style="left:811px;top:1044px;width:22px;height:20px;background:linear-gradient(135deg,#3a3a3a,#111);border-radius:2px"></div>
<div class="a" style="left:822px;top:1044px;width:11px;height:12px;background:linear-gradient(135deg,#bdbdbd,#9c9c9c);"></div>
<svg style="left:869px;top:1037px" width="23" height="25" viewBox="0 0 23 25"><path d="M1 1 Q0 8 5 10 L4 18 L11.5 24 L19 18 L18 10 Q23 8 22 1 Q19 6 16 5 Q14 3 11.5 3 Q9 3 7 5 Q4 6 1 1 Z" fill="#e08a1e"/><path d="M5 9 Q5 4 11.5 4 Q18 4 18 9 V17 L11.5 22 L5 17 Z" fill="#4b2a7a"/><path d="M7 10 H16 V13 H7 Z" fill="#1b0f2e"/><path d="M9 11 H11 M12.5 11 H14.5" stroke="#ff5a2a" stroke-width="1"/><path d="M5 17 L11.5 24 L18 17 L16 20 L11.5 22 L7 20 Z" fill="#b3203a"/></svg>
<svg style="left:919px;top:1033px" width="37" height="33" viewBox="0 0 37 33"><circle cx="12" cy="7" r="4.5" fill="#7b83eb"/><path d="M8 13 H22 Q25 13 25 16 V25 Q25 32 17 32 Q10 32 8 26 Z" fill="#7b83eb"/><path d="M17 15 H26 Q28 15 28 17 V24 Q28 29 23 29 Q19 29 17 26 Z" fill="#5059c9" opacity="0.9"/><rect x="2" y="17" width="12" height="12" rx="2" fill="#4b53bc"/><path d="M5 20 H11 M8 20 V26.5" stroke="#fff" stroke-width="1.7"/><circle cx="27.5" cy="7" r="7.5" fill="#1a9b21" stroke="#fff" stroke-width="1.3"/><path d="M24 7 L26.5 9.5 L31 4.7" fill="none" stroke="#fff" stroke-width="1.7"/></svg>
<div class="a" style="left:932px;top:1071px;width:8px;height:3px;background:#7b8574;border-radius:3px"></div>
<svg style="left:976px;top:1035px" width="30" height="31" viewBox="0 0 30 31"><path d="M9 6 V3 Q9 1 11 1 H19 Q21 1 21 3 V6" fill="none" stroke="#29a3ea" stroke-width="1.8"/><rect x="0" y="5" width="30" height="26" rx="4" fill="#1c5aa6"/><rect x="9" y="12" width="5.5" height="5.5" fill="#f25022"/><rect x="15.5" y="12" width="5.5" height="5.5" fill="#7fba00"/><rect x="9" y="18.5" width="5.5" height="5.5" fill="#00a4ef"/><rect x="15.5" y="18.5" width="5.5" height="5.5" fill="#ffb900"/></svg>
<svg style="left:1031px;top:1035px" width="30" height="30" viewBox="0 0 30 30"><path d="M8 9 L18 2 L29 9 V25 Q29 28 26 28 H10 Q8 28 8 25 Z" fill="#1a8ee0"/><path d="M8 9 L18 2 L29 9 L18 16 Z" fill="#4a5ad8"/><path d="M8 14 L29 9 V25 Q29 28 26 28 H10 Z" fill="#33c0f5"/><rect x="1" y="14" width="13" height="12" rx="2" fill="#0f6cbd"/><circle cx="7.5" cy="20" r="3.5" fill="none" stroke="#fff" stroke-width="1.8"/></svg>
<svg style="left:1086px;top:1035px" width="30" height="30" viewBox="0 0 30 30"><defs><linearGradient id="eg1086" x1="0" y1="1" x2="1" y2="0"><stop offset="0" stop-color="#0c59a4"/><stop offset="0.5" stop-color="#1b9de2"/><stop offset="1" stop-color="#5ad17a"/></linearGradient></defs><path d="M27.5 20.5 Q24 27.5 15.5 28 Q5 28 2 18 Q0.5 8 8.5 3.5 Q15 0 22 3 Q28.5 6.5 28.5 14 Q28.5 18 25 18.5 H13 Q12.5 23.5 19 24 Q24 24 27.5 20.5 Z" fill="url(#eg1086)"/><path d="M2.5 15 Q3 8 10 6 Q17 5 19 11 Q13 9 10 12.5 Q7 16 9.5 22 Q11.5 26.5 15.5 28 Q5 28 2.5 15 Z" fill="#0f4d8c" opacity="0.85"/></svg>
<div class="a" style="left:1097px;top:1071px;width:8px;height:3px;background:#7b8574;border-radius:3px"></div>
<svg style="left:1140px;top:1037px" width="31" height="27" viewBox="0 0 31 27"><path d="M0 3 Q0 0 3 0 H11 L14 3 H28 Q31 3 31 6 V24 Q31 27 28 27 H3 Q0 27 0 24 Z" fill="#e8a820"/><path d="M0 8 H31 V24 Q31 27 28 27 H3 Q0 27 0 24 Z" fill="#ffd24a"/><rect x="9" y="18" width="13" height="4" rx="1" fill="#2d7ad6"/></svg>
<svg style="left:1196px;top:1036px" width="30" height="29" viewBox="0 0 30 29"><defs><linearGradient id="cpl" x1="0" y1="0" x2="0" y2="1"><stop offset="0" stop-color="#1aa8f0"/><stop offset="0.45" stop-color="#3fc27a"/><stop offset="0.8" stop-color="#f2b430"/><stop offset="1" stop-color="#f06a3a"/></linearGradient><linearGradient id="cpr" x1="0" y1="0" x2="0" y2="1"><stop offset="0" stop-color="#2a6ff0"/><stop offset="0.4" stop-color="#9a5cf0"/><stop offset="0.8" stop-color="#e858b0"/><stop offset="1" stop-color="#f4784a"/></linearGradient></defs><path d="M10 1 Q13 0 15 2 L8 22 Q6.5 27 11 28 Q6 29 3 27 Q0 25 1 21 L4.5 8 Q6 2 10 1 Z" fill="url(#cpl)"/><path d="M20 28 Q17 29 15 27 L22 7 Q23.5 2 19 1 Q24 0 27 2 Q30 4 29 8 L25.5 21 Q24 27 20 28 Z" fill="url(#cpr)"/><path d="M15 2 Q18 0.5 19 1 Q23.5 2 22 7 L15 27 Q12 28.5 11 28 Q6.5 27 8 22 Z" fill="url(#cpr)" opacity="0.55"/></svg>
<svg style="left:1250px;top:1035px" width="30" height="30" viewBox="0 0 30 30"><circle cx="15" cy="15" r="14.5" fill="#db4437"/><path d="M15 15 L2.4 22.3 A14.5 14.5 0 0 1 2.4 7.7 Z" fill="#0f9d58"/><path d="M15 15 L27.6 7.7 A14.5 14.5 0 0 1 15 29.5 A14.5 14.5 0 0 1 2.4 22.3 Z" fill="#0f9d58"/><path d="M15 15 L27.6 7.7 A14.5 14.5 0 0 1 15 29.5 Z" fill="#ffcd40"/><path d="M15 15 L2.4 7.7 A14.5 14.5 0 0 1 27.6 7.7 Z" fill="#db4437"/><circle cx="15" cy="15" r="6.5" fill="#fff"/><circle cx="15" cy="15" r="5.2" fill="#1a73e8"/></svg>
<svg style="left:1267px;top:1027px" width="20" height="20" viewBox="0 0 20 20"><circle cx="10" cy="10" r="9.5" fill="#bdb5b0" stroke="#eee" stroke-width="1"/><circle cx="10" cy="8" r="3.5" fill="#f3e4da"/><path d="M4 17 Q5 12 10 12 Q15 12 16 17" fill="#f3e4da"/><path d="M6.5 7 Q7 3 10 3 Q13 3 13.5 7 Q12 5 10 5 Q8 5 6.5 7 Z" fill="#5a4a44"/></svg>
<div class="a" style="left:1262px;top:1071px;width:8px;height:3px;background:#7b8574;border-radius:3px"></div>
<svg style="left:1305px;top:1039px" width="31" height="21" viewBox="0 0 31 21"><defs><radialGradient id="od" cx="0.6" cy="0.2" r="0.9"><stop offset="0" stop-color="#a8dfe6"/><stop offset="0.4" stop-color="#45a7b4"/><stop offset="1" stop-color="#0c6775"/></radialGradient></defs><path d="M6.5 20.5 Q0.3 20.5 0.5 15 Q0.8 10 6.5 10 Q8.5 1 16 1 Q24 1 25 8.5 Q30.7 9.3 30.5 15 Q30.2 20.5 24.5 20.5 Z" fill="url(#od)"/></svg>
<div class="a" style="left:1317px;top:1071px;width:8px;height:3px;background:#7b8574;border-radius:3px"></div>
<svg style="left:1360px;top:1029px" width="37" height="37" viewBox="0 0 37 37"><path d="M15 6 Q29 6 29 20 Q29 34 15 34 Q11 34 8 32.5 L3 34 L4.5 29.5 Q1 26 1 20 Q1 6 15 6 Z" fill="#fff"/><path d="M15 8 Q27 8 27 20 Q27 32 15 32 Q3 32 3 20 Q3 8 15 8 Z" fill="#0b68ff" opacity="0.12"/><path d="M15 6 Q29 6 29 20 Q29 34 15 34 Q11 34 8 32.5 L3 34 L4.5 29.5 Q1 26 1 20 Q1 6 15 6 Z" fill="none" stroke="#0b68ff" stroke-width="2.5"/><text x="15" y="23" font-size="8.5" fill="#0b68ff" text-anchor="middle" font-family="Liberation Sans" font-weight="700">Zalo</text><circle cx="27" cy="10" r="8.5" fill="#e2231a"/><text x="27" y="13.5" font-size="9.5" fill="#fff" text-anchor="middle" font-family="Liberation Sans">5+</text></svg>
<div class="a" style="left:1372px;top:1071px;width:8px;height:3px;background:#7b8574;border-radius:3px"></div>
<svg style="left:1415px;top:1035px" width="30" height="30" viewBox="0 0 30 30"><rect x="7" y="1" width="22" height="28" rx="2" fill="#41a5ee"/><rect x="7" y="8" width="22" height="7" fill="#2b7cd3"/><rect x="7" y="15" width="22" height="7" fill="#185abd"/><path d="M7 22 H29 V27 Q29 29 27 29 H9 Q7 29 7 27 Z" fill="#103f91"/><rect x="0" y="7" width="15" height="15" rx="2" fill="#185abd"/><path d="M2.5 10 L4.5 19 L7.5 12.5 L10.5 19 L12.5 10" fill="none" stroke="#fff" stroke-width="1.6"/></svg>
<div class="a" style="left:1427px;top:1071px;width:8px;height:3px;background:#7b8574;border-radius:3px"></div>
<svg style="left:1595px;top:1045px" width="16" height="10" viewBox="0 0 16 10"><path d="M0.8 9 L8 1.5 L15.2 9" fill="none" stroke="#1a1a1a" stroke-width="1.6"/></svg>
<div class="t" style="left:1640px;top:1044.66px;font-size:13.4px;color:#1a1a1a;">VIE</div>
<svg style="left:1688px;top:1042px" width="21" height="16" viewBox="0 0 21 16"><g fill="none" stroke="#1a1a1a" stroke-width="1.5"><path d="M1 5.5 Q10.5 -2.5 20 5.5"/><path d="M4.2 8.6 Q10.5 3.3 16.8 8.6"/><path d="M7.3 11.5 Q10.5 8.8 13.7 11.5"/></g><circle cx="10.5" cy="14" r="1.6" fill="#1a1a1a"/></svg>
<svg style="left:1718px;top:1041px" width="21" height="18" viewBox="0 0 21 18"><path d="M0.8 6 H4 L9 1.5 V16.5 L4 12 H0.8 Z" fill="none" stroke="#1a1a1a" stroke-width="1.3" stroke-linejoin="round"/><g fill="none" stroke="#1a1a1a" stroke-width="1.3"><path d="M12 6 Q13.5 9 12 12"/><path d="M14.5 3.5 Q17.5 9 14.5 14.5"/><path d="M17 1 Q21.5 9 17 17"/></g></svg>
<svg style="left:1748px;top:1040px" width="21" height="18" viewBox="0 0 21 18"><rect x="1" y="6" width="16" height="10" rx="1.5" fill="none" stroke="#1a1a1a" stroke-width="1.4"/><rect x="17.5" y="9" width="2.5" height="4" rx="1" fill="#1a1a1a"/><path d="M4 6 L6 1 L6 4.5 L8 4.5" fill="none" stroke="#1a1a1a" stroke-width="1.2"/></svg>
<div class="t" style="left:1665.3px;width:200px;text-align:right;top:1032.60px;font-size:14.3px;color:#1a1a1a;">6:29 PM</div>
<div class="t" style="left:1665.3px;width:200px;text-align:right;top:1052.12px;font-size:15.1px;color:#1a1a1a;">10/30/2025</div>
<svg style="left:1876px;top:1040px" width="19" height="19" viewBox="0 0 19 19"><path d="M8 3 Q3 3 3 9 V13 L1 15.5 H15 L13 13 V10" fill="none" stroke="#1a1a1a" stroke-width="1.4" stroke-linejoin="round"/><path d="M6 16.5 Q8 19 10 16.5" fill="none" stroke="#1a1a1a" stroke-width="1.3"/><path d="M11 1 H15 L11 5.5 H15 M14.5 6.5 H18 L14.5 10 H18" fill="none" stroke="#1a1a1a" stroke-width="1.1"/></svg>
</body></html>
